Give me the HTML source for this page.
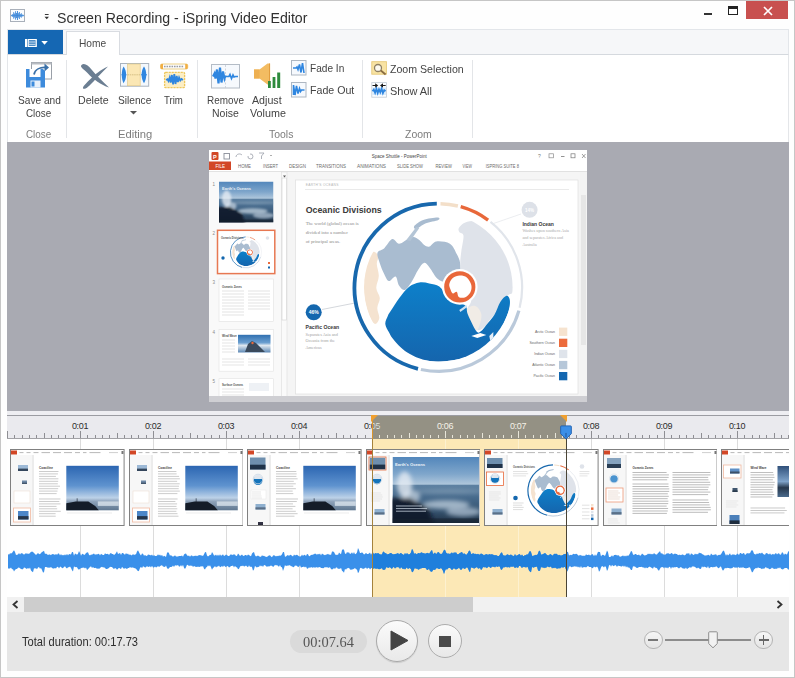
<!DOCTYPE html>
<html><head><meta charset="utf-8"><title>Screen Recording - iSpring Video Editor</title>
<style>
*{box-sizing:border-box;margin:0;padding:0}
html,body{width:795px;height:678px;overflow:hidden;background:#fff;font-family:"Liberation Sans",sans-serif;}
#win{position:absolute;left:0;top:0;width:795px;height:678px;background:#fefefe;box-shadow:inset 0 0 0 1px #c6c6c6;overflow:hidden}
#win div,#win span,#win i,#win svg,#win b{position:absolute}
i{display:block}
.t{white-space:nowrap;transform-origin:0 0}
/* title */
#title{left:57px;top:7px;font-size:16px;line-height:20px;color:#2a2a2a;transform:scaleX(.885)}
#tabs{left:7px;top:29px;width:781.5px;height:26px;background:#f6f7f9;border:1px solid #e3e6ea;border-bottom-color:#d5d9de}
#filebtn{left:8px;top:30px;width:55px;height:24px;background:#1567b3}
#hometab{left:65.5px;top:31px;width:54px;height:24px;background:#fff;border:1px solid #d9dce1;border-bottom:none}
#hometab span{left:12px;top:5px;font-size:11px;color:#444;line-height:13px}
#ribbon{left:7px;top:55px;width:781.5px;height:87px;background:#fff;border-left:1px solid #e4e6e9;border-right:1px solid #e4e6e9}
.lbl{font-size:11px;color:#444;line-height:13px;white-space:nowrap;transform-origin:0 0}
.grp{font-size:11px;color:#7a7a7a;line-height:13px;white-space:nowrap;transform-origin:0 0}
.sep{top:60px;width:1px;height:78px;background:#e3e5e8}
/* preview */
#preview{left:7px;top:142px;width:781.5px;height:269px;background:#a9aab2}
/* timeline */
#tlgap{left:7px;top:411px;width:781.5px;height:4px;background:#eeeef2}
#tl{left:7px;top:415px;width:781.5px;height:182px;background:#fff;overflow:hidden}
#ruler{left:0;top:0;width:781.5px;height:24px;background:#eaeaee;border-top:1px solid #9b9ca2;border-bottom:1px solid #a2a2a6}
.tk{position:absolute;bottom:0;width:1px;background:#8e8e93}
.rl{top:4.5px;width:30px;text-align:center;font-size:9px;line-height:11px;color:#2c2c2c;letter-spacing:-.35px}
.gl{top:24px;width:1px;height:160px;background:#dcdcdc}
#scroll{left:7px;top:597px;width:781.5px;height:15px;background:#f1f1f1}
#bottom{left:7px;top:612px;width:781.5px;height:59px;background:#e6e6e6}
#selr{left:365px;top:0;width:194px;height:24px;background:#949184}
.ts{background:#e8e6da}
.rs{color:#f4f2e8}
#sely{left:365px;top:24px;width:194px;height:158px;background:#fce8b6}
.gs{background:#fdf1d0}
.th{top:34px;width:114.6px;height:77px;overflow:hidden}
.th svg{left:0;top:0}
#selL{left:364.5px;top:0;width:1.5px;height:182px;background:linear-gradient(#d9962e 0,#d9962e 24px,#a5823c 24px)}
#ph{left:558.5px;top:20px;width:1.3px;height:162px;background:#4a4436}
#sthumb{left:17px;top:0;width:449px;height:15px;background:#cdcdcd}
#pill{left:289.5px;top:630px;width:77.5px;height:23px;border-radius:11.5px;background:#dadada}
#play{left:375.8px;top:619.9px;width:42px;height:42px;border-radius:50%;background:linear-gradient(#fbfbfb,#e9e9e9);border:1px solid #a9a9a9;box-shadow:0 1px 1px rgba(0,0,0,.12)}
#stop{left:427.8px;top:623.9px;width:34px;height:34px;border-radius:50%;background:linear-gradient(#fafafa,#e8e8e8);border:1px solid #adadad}
.zc{width:18.5px;height:18.5px;border-radius:50%;background:linear-gradient(#f6f6f6,#e4e4e4);border:1px solid #b4b4b4}

</style></head><body>
<div id="win">
<svg style="left:10px;top:9px" width="15" height="13" viewBox="0 0 15 13"><rect x=".5" y=".5" width="14" height="12" fill="#fafcfe" stroke="#a9b0ba"/><path d="M1 6.5h13" stroke="#7fb2ea" stroke-width=".8"/><path d="M1.8 5.8v1.5M2.8 5v3M3.7 3.2v6.5M4.6 4.5v4M5.6 2.2v8.5M6.5 4v5M7.5 2v9M8.4 4.2v4.5M9.4 3v7M10.3 5v3M11.3 4.2v4.5M12.2 5.5v2M13.2 5.8v1.5" fill="none" stroke="#2f7fd6" stroke-width=".85"/></svg>
<svg style="left:43.5px;top:13.8px" width="5.5" height="6" viewBox="0 0 7 8"><rect x="1" y="0" width="5" height="1.3" fill="#333"/><path d="M.5 3.5h6l-3 3.5z" fill="#333"/></svg>
<span class="t" style="left:56.7px;top:10.1px;font-size:15.5px;line-height:1;color:#303030;transform:scaleX(0.912);">Screen Recording - iSpring Video Editor</span>
<i style="position:absolute;left:704px;top:13px;width:8px;height:2px;background:#333"></i>
<i style="position:absolute;left:728px;top:6px;width:10px;height:9px;border:1px solid #222;border-top-width:3px"></i>
<div style="left:746px;top:1px;width:42px;height:18px;background:#c8504f"></div>
<svg style="left:763px;top:6px" width="10" height="10" viewBox="0 0 10 10"><path d="M1 1l8 8M9 1l-8 8" stroke="#fff" stroke-width="1.7"/></svg>
<div id="tabs"></div>
<div id="filebtn"><svg style="left:17.2px;top:9px" width="28" height="8" viewBox="0 0 28 8"><rect x="0" y="0" width="2" height="8" fill="#fff"/><rect x="3.2" y=".6" width="8" height="6.8" fill="none" stroke="#fff" stroke-width="1.3"/><path d="M4 3h6.5M4 5.2h6.5" stroke="#fff" stroke-width="1"/><path d="M16.3 2h6.5l-3.25 3.8z" fill="#fff"/></svg></div>
<div id="hometab"></div><span class="t" style="left:78.5px;top:38px;font-size:11px;line-height:1;color:#4a4a4a;transform:scaleX(0.927);">Home</span>
<div id="ribbon"></div><i class="sep" style="left:66px"></i><i class="sep" style="left:197px"></i><i class="sep" style="left:362px"></i><i class="sep" style="left:472px"></i><span class="t" style="left:17.6px;top:95.3px;font-size:11px;line-height:1;color:#444;transform:scaleX(0.921);">Save and</span><span class="t" style="left:26.4px;top:107.9px;font-size:11px;line-height:1;color:#444;transform:scaleX(0.896);">Close</span><span class="t" style="left:26.4px;top:128.7px;font-size:11px;line-height:1;color:#7d7d7d;transform:scaleX(0.896);">Close</span><span class="t" style="left:78px;top:95.3px;font-size:11px;line-height:1;color:#444;transform:scaleX(0.966);">Delete</span><span class="t" style="left:117.7px;top:95.3px;font-size:11px;line-height:1;color:#444;transform:scaleX(0.923);">Silence</span><span class="t" style="left:163.5px;top:95.3px;font-size:11px;line-height:1;color:#444;transform:scaleX(0.875);">Trim</span><span class="t" style="left:117.7px;top:128.7px;font-size:11px;line-height:1;color:#7d7d7d;transform:scaleX(1.02);">Editing</span><svg style="left:130px;top:111px" width="7" height="4"><path d="M0 0h7l-3.5 3.5z" fill="#555"/></svg><span class="t" style="left:206.5px;top:95.3px;font-size:11px;line-height:1;color:#444;transform:scaleX(0.901);">Remove</span><span class="t" style="left:212.2px;top:107.9px;font-size:11px;line-height:1;color:#444;transform:scaleX(0.953);">Noise</span><span class="t" style="left:252.4px;top:95.3px;font-size:11px;line-height:1;color:#444;transform:scaleX(0.968);">Adjust</span><span class="t" style="left:249.5px;top:107.9px;font-size:11px;line-height:1;color:#444;transform:scaleX(0.978);">Volume</span><span class="t" style="left:269.2px;top:128.7px;font-size:11px;line-height:1;color:#7d7d7d;transform:scaleX(0.95);">Tools</span><span class="t" style="left:309.7px;top:63.3px;font-size:11px;line-height:1;color:#444;transform:scaleX(0.919);">Fade In</span><span class="t" style="left:309.7px;top:85.3px;font-size:11px;line-height:1;color:#444;transform:scaleX(0.966);">Fade Out</span><span class="t" style="left:390px;top:63.5px;font-size:11px;line-height:1;color:#444;transform:scaleX(0.964);">Zoom Selection</span><span class="t" style="left:390px;top:85.7px;font-size:11px;line-height:1;color:#444;transform:scaleX(0.995);">Show All</span><span class="t" style="left:404.8px;top:128.7px;font-size:11px;line-height:1;color:#7d7d7d;transform:scaleX(0.953);">Zoom</span><!-- save and close -->
<svg style="left:24px;top:60px" width="30" height="30" viewBox="0 0 30 30">
<rect x="7.5" y="2.5" width="20" height="16.5" fill="#fff" stroke="#9aa0a8"/>
<rect x="7.5" y="2.5" width="20" height="2" fill="#b8bcc2"/>
<path d="M2 9h17l2 2v16.5H2z" fill="#3d8bdc"/>
<rect x="5.5" y="9" width="11" height="8" fill="#fff"/>
<rect x="6.5" y="20.5" width="10" height="7" fill="#e9f1fb"/>
<rect x="7.5" y="21.5" width="3" height="5" fill="#3d8bdc"/>
<path d="M10 14.5c1-5 6-7.5 12-7" fill="none" stroke="#3a70a8" stroke-width="1.8"/>
<path d="M20.5 3.5l4.5 4-4.5 4z" fill="#3a70a8"/>
</svg>
<!-- delete -->
<svg style="left:79px;top:62px" width="32" height="28" viewBox="0 0 32 28">
<path d="M2.5 3c2.5-2.5 6.5 0 10 4.5 5 6 10.5 11.5 17.5 18-8-2.5-15.5-8-21.5-14.5C4.5 7 0.5 5 2.5 3z" fill="#6b7e92"/>
<path d="M29 4.5c-7.5 3-13.5 8.5-17.5 12.5-4.5 4.5-8 7.5-7.5 9.5 2.5 1.5 6-2.5 9-5.5C17 17 23 10.5 29 4.5z" fill="#6b7e92"/>
</svg>
<!-- silence -->
<svg style="left:120px;top:62px" width="30" height="26" viewBox="0 0 30 26">
<rect x=".5" y="1.5" width="28.2" height="22.7" fill="#f4f8fc" stroke="#a9b3be"/>
<rect x="7.6" y="2" width="12.6" height="21.7" fill="#fbe7b4" stroke="#e3cb8c" stroke-width=".7"/>
<path d="M7.6 12.8h12.6" stroke="#cdb679" stroke-width=".8" stroke-dasharray="1.5 .7"/>
<path d="M3.5 4.5C7 9 7 16.5 3.5 21.2C1.2 16.5 1.2 9 3.5 4.5z" fill="#2f86e0"/>
<path d="M6.5 12.8h-5" stroke="#2f86e0" stroke-width="1"/>
<path d="M24 4.5C27 9 27 16.5 24 21.2C20.8 16.5 20.8 9 24 4.5z" fill="#2f86e0"/>
<path d="M21 12.8h6" stroke="#2f86e0" stroke-width="1"/>
</svg>
<!-- trim -->
<svg style="left:159px;top:61px" width="30" height="28" viewBox="0 0 30 28">
<rect x="1.5" y="3" width="27.2" height="5" rx="1.5" fill="#fdfdfd" stroke="#e9c977" stroke-width=".9"/>
<path d="M5 5.5h20" stroke="#9a9da3" stroke-width="1.4" stroke-dasharray="1.6 .9"/>
<path d="M1.5 4.2a1.2 1.2 0 0 1 1.2-1.2H4v5H2.7a1.2 1.2 0 0 1-1.2-1.2zM28.7 4.2a1.2 1.2 0 0 0-1.2-1.2H26.2v5h1.3a1.2 1.2 0 0 0 1.2-1.2z" fill="#f2ae42"/>
<rect x="5.6" y="11.4" width="20" height="15.2" rx="1" fill="#fceec4" stroke="#eec85e" stroke-width="1.3" stroke-dasharray="2.2 .8"/>
<path d="M7 19l1.5-.8 1 1.8 1.2-3.5 1 5 1.2-7.5 1.2 9.5 1.2-10.5 1.2 10 1.2-8 1.2 6 1.2-4.5 1.2 3 1.2-1.5 1.5 1" fill="none" stroke="#2f86e0" stroke-width="1.8"/>
</svg>
<!-- remove noise -->
<svg style="left:211px;top:64px" width="29" height="25" viewBox="0 0 29 25">
<rect x=".5" y=".5" width="28" height="23.5" fill="#f6f9fd" stroke="#b4bcc6"/>
<path d="M14.5 1v23" stroke="#c6ccd4" stroke-width=".8" stroke-dasharray="2 1.5"/>
<path d="M2 12.5l1.5-3 1 5 1.5-9 1.5 14 1.5-16 1.5 15 1.5-11 1.5 7 1-3" fill="none" stroke="#2f86e0" stroke-width="2.2"/>
<path d="M15 12.5h3l1-2 1.5 4 1.5-3.5 1 2 1.5-.5h2.5" fill="none" stroke="#2f86e0" stroke-width="1.7"/>
</svg>
<!-- adjust volume -->
<svg style="left:252px;top:62px" width="32" height="27" viewBox="0 0 32 27">
<path d="M2 7.5h5.5L15.5 1.5h2.5v21h-2.5L7.5 16.5H2z" fill="#f3bc62"/>
<path d="M2 7.5h5.5v9H2z" fill="#eeb052"/>
<path d="M17.6 1.5v21" stroke="#e09a3c" stroke-width="1"/>
<rect x="16" y="19" width="2.8" height="7" fill="#2e8b3d"/>
<rect x="20.6" y="15" width="2.8" height="11" fill="#2e8b3d"/>
<rect x="25.2" y="10.5" width="3" height="15.5" fill="#2e8b3d"/>
</svg>
<!-- fade in -->
<svg style="left:291px;top:60px" width="16" height="16" viewBox="0 0 16 16">
<rect x=".5" y=".5" width="14.5" height="14.5" fill="#f6f9fd" stroke="#aeb7c2"/>
<path d="M2 8h3l1-1 1 2.5 1.5-5 1.5 8 1.5-9.5 1.5 10" fill="none" stroke="#2f86e0" stroke-width="1.6"/>
</svg>
<!-- fade out -->
<svg style="left:291px;top:81.8px" width="16" height="16" viewBox="0 0 16 16">
<rect x=".5" y=".5" width="14.5" height="14.5" fill="#f6f9fd" stroke="#aeb7c2"/>
<path d="M2.5 13V3l1.5 10 1.5-9 1.5 7.5 1.5-5 1 3 1-1.5h3" fill="none" stroke="#2f86e0" stroke-width="1.6"/>
</svg>
<!-- zoom selection -->
<svg style="left:371px;top:60.5px" width="17" height="15" viewBox="0 0 17 15">
<rect x=".8" y=".7" width="14.6" height="12.5" fill="#f8e3a4" stroke="#e6c978" stroke-width=".9"/>
<circle cx="7" cy="7" r="3.5" fill="#fdfaf0" stroke="#8f8064" stroke-width="1.3"/>
<path d="M9.8 9.6l4.8 3.8" stroke="#8a6d42" stroke-width="1.9"/>
</svg>
<!-- show all -->
<svg style="left:371px;top:82px" width="17" height="16" viewBox="0 0 17 16">
<rect x=".8" y=".6" width="14.6" height="14.6" fill="#fbfdff" stroke="#c3ccd6" stroke-width=".8"/>
<rect x="1.2" y="5.5" width="13.8" height="7.5" fill="#d9ebfb"/>
<path d="M1.5 9.2l1.3-1.7 1.3 3.4 1.3-4.4 1.3 4.6 1.3-3.8 1.3 3 1.3-3.8 1.3 4.6 1.3-3 1.4 1.1" fill="none" stroke="#2f86e0" stroke-width="1.7"/>
<path d="M1.5 3.5h4M10.7 3.5h4" stroke="#1a1a1a" stroke-width="1.1"/><path d="M4.2 1.3l3 2.2-3 2.2zM12 1.3l-3 2.2 3 2.2z" fill="#1a1a1a"/>
</svg>
<div id="preview"></div><svg style="left:209px;top:150px" width="378" height="252" viewBox="0 0 378 252" font-family="Liberation Sans, sans-serif"><rect width="378" height="252" fill="#fff"/><rect x="0" y="21" width="378" height="231" fill="#f5f5f5"/><rect x="0" y="21" width="72" height="231" fill="#f9f9f9"/><rect x="2.5" y="2" width="7" height="8" rx="1" fill="#d24726"/><text x="4" y="8.5" font-size="5.5" font-weight="700" fill="#fff">P</text><rect x="15" y="3.5" width="5.5" height="5.5" fill="none" stroke="#8a8f99" stroke-width=".9"/><path d="M27 7c0-3 4-4 6-2M39 6a2.5 2.5 0 1 0 2-2M50 3h5l-2.5 3v3" fill="none" stroke="#9a9faa" stroke-width=".8"/><path d="M61 5.5h2" stroke="#999" stroke-width=".8"/><text x="162.8" y="7.8" font-size="4.7" fill="#444" textLength="55" lengthAdjust="spacingAndGlyphs">Space Shuttle - PowerPoint</text><text x="329" y="8" font-size="5" fill="#777">?</text><rect x="340" y="3.8" width="4.5" height="4" fill="none" stroke="#8a8a8a" stroke-width=".7"/><path d="M352 6.5h3.5" stroke="#777" stroke-width=".8"/><rect x="362" y="3.8" width="4" height="4" fill="none" stroke="#777" stroke-width=".7"/><path d="M373 4l3.5 4M376.5 4l-3.5 4" stroke="#777" stroke-width=".7"/><rect x="0" y="11.5" width="22" height="8.5" fill="#d24726"/><text x="6.5" y="17.6" font-size="4.6" fill="#fff" textLength="9.5" lengthAdjust="spacingAndGlyphs">FILE</text><text x="29" y="17.5" font-size="4.5" fill="#6a6a6a" textLength="13" lengthAdjust="spacingAndGlyphs">HOME</text><text x="54" y="17.5" font-size="4.5" fill="#6a6a6a" textLength="15" lengthAdjust="spacingAndGlyphs">INSERT</text><text x="80" y="17.5" font-size="4.5" fill="#6a6a6a" textLength="17" lengthAdjust="spacingAndGlyphs">DESIGN</text><text x="107" y="17.5" font-size="4.5" fill="#6a6a6a" textLength="30" lengthAdjust="spacingAndGlyphs">TRANSITIONS</text><text x="148" y="17.5" font-size="4.5" fill="#6a6a6a" textLength="29" lengthAdjust="spacingAndGlyphs">ANIMATIONS</text><text x="188" y="17.5" font-size="4.5" fill="#6a6a6a" textLength="26" lengthAdjust="spacingAndGlyphs">SLIDE SHOW</text><text x="226.6" y="17.5" font-size="4.5" fill="#6a6a6a" textLength="16.4" lengthAdjust="spacingAndGlyphs">REVIEW</text><text x="253.6" y="17.5" font-size="4.5" fill="#6a6a6a" textLength="9.4" lengthAdjust="spacingAndGlyphs">VIEW</text><text x="276.7" y="17.5" font-size="4.5" fill="#6a6a6a" textLength="33.3" lengthAdjust="spacingAndGlyphs">ISPRING SUITE 8</text><path d="M0 21.5h378" stroke="#dcdcdc" stroke-width=".8"/><text x="3.5" y="36" font-size="4.5" fill="#8a8a8a">1</text><text x="3.5" y="85" font-size="4.5" fill="#8a8a8a">2</text><text x="3.5" y="134" font-size="4.5" fill="#8a8a8a">3</text><text x="3.5" y="184" font-size="4.5" fill="#8a8a8a">4</text><text x="3.5" y="233" font-size="4.5" fill="#8a8a8a">5</text><defs><linearGradient id="osa" x1="0" y1="0" x2="0" y2="1"><stop offset="0" stop-color="#5286bb"/><stop offset=".6" stop-color="#7fa6cb"/><stop offset="1" stop-color="#b4cadd"/></linearGradient><linearGradient id="oea" x1="0" y1="0" x2="0" y2="1"><stop offset="0" stop-color="#5d81a2"/><stop offset=".35" stop-color="#46698b"/><stop offset=".7" stop-color="#35526e"/><stop offset="1" stop-color="#1f3044"/></linearGradient><filter id="oba" x="-30%" y="-30%" width="160%" height="160%"><feGaussianBlur stdDeviation="1.2"/></filter><clipPath id="oca"><rect x="10" y="31.5" width="54.5" height="41"/></clipPath></defs><g clip-path="url(#oca)"><rect x="10" y="31.5" width="54.5" height="17.6" fill="url(#osa)"/><rect x="10" y="48.7" width="54.5" height="23.8" fill="url(#oea)"/><g filter="url(#oba)"><ellipse cx="17.6" cy="48.7" rx="4.6" ry="8.2" fill="#e9eff5" opacity=".75"/><ellipse cx="22" cy="56.1" rx="5.5" ry="4.1" fill="#dfe8f0" opacity=".6"/><ellipse cx="43.8" cy="61" rx="14.7" ry="2.7" fill="#b8c9d8" opacity=".8"/><ellipse cx="54.7" cy="65.5" rx="10.9" ry="2.9" fill="#aebfd0" opacity=".75"/><ellipse cx="45.4" cy="52.8" rx="21.8" ry="1.4" fill="#8da6bd" opacity=".6"/><path d="M7.3 56.9L20.9 56.9L32.9 63.5L37.2 76.6L7.3 76.6z" fill="#111b28" opacity=".9"/></g><rect x="10" y="69.6" width="54.5" height="2.9" fill="#16212e" opacity=".55"/></g><text x="13" y="40" font-size="4" font-weight="700" fill="#e8eef5">Earth's Oceans</text><rect x="8.5" y="80.3" width="57.3" height="43.3" fill="#fff" stroke="#e77852" stroke-width="1.5"/><g transform="translate(36.9 102.4) scale(0.185) translate(-229 -137.5)"><path d="M208.7 218.8 A83.8 83.8 0 0 1 227.5 53.7" fill="none" stroke="#1868ad" stroke-width="3.8"/><path d="M231.2 53.7 A83.8 83.8 0 0 1 248.6 56" fill="none" stroke="#f3dfc9" stroke-width="3.4"/><path d="M251.4 56.7 A83.8 83.8 0 0 1 278.8 70.1" fill="none" stroke="#e8683a" stroke-width="3.4"/><path d="M281.2 71.9 A83.8 83.8 0 0 1 310.3 157.8" fill="none" stroke="#e1e5eb" stroke-width="2.2"/><path d="M309.6 160.6 A83.8 83.8 0 0 1 211.6 219.5" fill="none" stroke="#bac9da" stroke-width="3.2"/><defs><linearGradient id="g369b" x1="0" y1="0" x2="0" y2="1"><stop offset="0" stop-color="#0d80ca"/><stop offset="1" stop-color="#1565ad"/></linearGradient><clipPath id="g369c"><circle cx="229" cy="137.5" r="74.3"/></clipPath></defs><g clip-path="url(#g369c)"><path d="M163.5 102 C161.7 103 159.4 108.2 158 112 C156.6 115.8 155.6 120.3 155 125 C154.4 129.7 154.2 135 154.5 140 C154.8 145 155.4 150.3 156.5 155 C157.6 159.7 159.4 164.8 161 168 C162.6 171.2 164.5 174 166 174 C167.5 174 169.7 170.7 170 168 C170.3 165.3 167.9 161.3 168 158 C168.1 154.7 170.7 151.3 170.5 148 C170.3 144.7 167.2 141.7 167 138 C166.8 134.3 169.4 130 169.5 126 C169.6 122 167.6 117.3 167.5 114 C167.4 110.7 169.7 108 169 106 C168.3 104 165.3 101 163.5 102Z" fill="#f5e3d0" /><path d="M168.2 102.7 C169 100.2 172.6 100.5 175 98.2 C177.4 95.9 180.5 89.8 182.9 89.1 C185.3 88.3 187.2 93.6 189.7 93.7 C192.2 93.8 195.6 90.6 198 89.5 C200.4 88.4 202 86.9 204 87 C206 87.1 208.2 88.7 210 90 C211.8 91.3 213.3 93.9 215 95 C216.7 96.1 218.2 97.1 220.2 96.5 C222.2 95.9 223.6 91.9 227 91.4 C230.4 90.9 237.2 91.6 240.6 93.7 C244 95.8 245.7 100.7 247.4 103.9 C249.1 107.1 250.3 109.6 250.8 112.9 C251.3 116.2 251.8 120.8 250.5 124 C249.2 127.2 245.4 130.6 243 132 C240.6 133.4 238.6 132.7 236.1 132.2 C233.6 131.7 230.8 131.3 228.2 128.8 C225.5 126.3 222.5 120.1 220.2 117.4 C217.9 114.8 216.5 112.5 214.6 112.9 C212.7 113.3 211 116.5 208.9 119.7 C206.8 122.9 204.4 128.8 202.1 132.2 C199.8 135.6 197.4 139.4 195.3 140 C193.2 140.6 191.2 137.8 189.7 135.6 C188.2 133.3 188 127.3 186.3 126.5 C184.6 125.7 181.4 131.4 179.5 131 C177.6 130.6 176.5 127.2 175 124.2 C173.5 121.2 171.5 116.5 170.4 112.9 C169.3 109.3 167.4 105.2 168.2 102.7Z" fill="#a9bcd0" /><path d="M205 76 C206.2 74.5 210.2 71.4 214 70 C217.8 68.6 225.5 67.5 228 67.5 C230.5 67.5 231 69 229 70 C227 71 219.7 72 216 73.5 C212.3 75 208.8 78.6 207 79 C205.2 79.4 203.8 77.5 205 76Z" fill="#a9bcd0" /><path d="M197 90 L207 77 L210 78 L201 91Z" fill="#b4c5d6" /><path d="M249.7 77.8 C250.7 76.2 252.9 73.6 256 72.5 C259.1 71.4 264 70.4 268 71 C272 71.6 276 72.8 280 76 C284 79.2 288.7 84.7 292 90 C295.3 95.3 298 101.7 300 108 C302 114.3 303.4 122.3 304 128 C304.6 133.7 304.5 139 303.5 142 C302.5 145 300.2 143 298 146 C295.8 149 292.7 156.3 290 160 C287.3 163.7 284.5 165.2 282 168 C279.5 170.8 277.3 175 275 177 C272.7 179 270.2 181.2 268 180 C265.8 178.8 263.7 173.3 262 170 C260.3 166.7 258 163.3 258 160 C258 156.7 262 153.7 262 150 C262 146.3 259.7 142.3 258 138 C256.3 133.7 253.2 128.3 252 124 C250.8 119.7 251 115.7 251 112 C251 108.3 251.5 106 252 101.6 C252.5 97.2 254.5 89.1 254.2 85.8 C253.9 82.5 250.8 83.3 250 82 C249.2 80.7 248.7 79.4 249.7 77.8Z" fill="#dfe3ea" /><path d="M257 160 C258 157.3 263.5 155.3 266 156 C268.5 156.7 271.3 160.7 272 164 C272.7 167.3 271 173.2 270 176 C269 178.8 267.7 181.7 266 181 C264.3 180.3 261.5 175.5 260 172 C258.5 168.5 256 162.7 257 160Z" fill="#f1ece6" /><path d="M176 174 C175.8 171.3 177.6 168.2 178.5 166 C179.4 163.8 179.8 163.6 181.7 160.6 C183.6 157.6 187 152 190 148 C193 144 196.6 139.4 199.9 136.8 C203.2 134.2 206.7 133.1 210 132.5 C213.3 131.9 216.7 132.7 220 133.4 C223.3 134.1 227 134.4 230 136.5 C233 138.6 235 143.4 238 146 C241 148.6 244.9 150.3 248 152 C251.1 153.7 254.8 154.2 256.5 156 C258.2 157.8 257.1 160.3 258 163 C258.9 165.7 260.4 168.8 262 172 C263.6 175.2 266.1 180.5 267.8 182 C269.5 183.5 270.5 182.1 272 181 C273.5 179.9 274.6 178 276.8 175.3 C279 172.6 282.6 168.9 285 165 C287.4 161.1 289 155.2 291 152 C293 148.8 295.6 146.1 297.2 145.8 C298.8 145.5 300.1 147.6 300.5 150 C300.9 152.4 300.6 156 299.5 160 C298.4 164 296.2 169.6 294 174 C291.8 178.4 289 182.8 286 186.6 C283 190.4 279.8 194 276 197 C272.2 200 268 202.6 263.3 204.7 C258.6 206.8 253.3 208.4 248 209.5 C242.7 210.6 236.6 211.3 231.6 211.5 C226.6 211.7 221.8 211.1 218 210.5 C214.2 209.9 212.3 209.3 209 208 C205.7 206.7 201.2 204.6 198 202.5 C194.8 200.4 192.2 198.1 189.7 195.7 C187.2 193.3 184.7 190.3 183 188 C181.3 185.7 180.7 184.3 179.5 182 C178.3 179.7 176.2 176.7 176 174Z" fill="url(#g369b)" /><path d="M262 186 L271 183 L277 185 L268 188Z" fill="#fff" /><path d="M280 186 L284 182 L284 190 L281 191Z" fill="#e6eff8" /><path d="M250 160 L257 155 L258 157 L251 162Z" fill="#cfe3f4" /></g><circle cx="250.5" cy="136.9" r="17.8" fill="#fff"/><circle cx="250.5" cy="136.9" r="15.6" fill="#e9673a"/><path d="M240 133.9 C240.4 132.1 241.8 129.3 243.5 127.9 C245.2 126.5 248.2 125.5 250.5 125.4 C252.8 125.3 255.6 125.8 257.5 127.4 C259.4 129 261.4 132.4 262 134.9 C262.6 137.4 262.1 140.3 261 142.4 C259.9 144.5 257.4 146.7 255.5 147.4 C253.6 148.2 250.8 147.8 249.5 146.9 C248.2 146 248.5 142.5 247.5 141.9 C246.5 141.3 244.6 143.9 243.5 143.4 C242.4 142.9 241.6 140.5 241 138.9 C240.4 137.3 239.6 135.7 240 133.9Z" fill="#fff" /></g><circle cx="14" cy="108" r="1.7" fill="#1467ae"/><rect x="59" y="112" width="2" height="2" fill="#ea6a3c"/><rect x="59" y="116.5" width="2" height="2" fill="#1467ae"/><circle cx="58.5" cy="88" r="1.8" fill="#dfe3ea"/><text x="12" y="88.5" font-size="2.6" font-weight="700" fill="#555">Oceanic Divisions</text><rect x="10" y="129" width="54.5" height="42.3" fill="#fff" stroke="#e2e2e2" stroke-width=".6"/><text x="13" y="137.5" font-size="2.8" font-weight="700" fill="#555">Oceanic Zones</text><path d="M13 141h22M39 141h22" stroke="#dcdcdc" stroke-width=".8"/><path d="M13 144h22M39 144h22" stroke="#dcdcdc" stroke-width=".8"/><path d="M13 147h22M39 147h22" stroke="#dcdcdc" stroke-width=".8"/><path d="M13 150h22M39 150h22" stroke="#dcdcdc" stroke-width=".8"/><path d="M13 153h22M39 153h22" stroke="#dcdcdc" stroke-width=".8"/><path d="M13 156h22M39 156h22" stroke="#dcdcdc" stroke-width=".8"/><path d="M13 159h22M39 159h22" stroke="#dcdcdc" stroke-width=".8"/><path d="M13 162h22" stroke="#dcdcdc" stroke-width=".8"/><path d="M13 165h22" stroke="#dcdcdc" stroke-width=".8"/><rect x="10" y="179.4" width="54.5" height="41.8" fill="#fff" stroke="#e2e2e2" stroke-width=".6"/><text x="13" y="186.5" font-size="2.8" font-weight="700" fill="#555">Wind Wave</text><defs><linearGradient id="p4" x1="0" y1="0" x2="0" y2="1"><stop offset="0" stop-color="#2f6fb0"/><stop offset=".45" stop-color="#6b9fd0"/><stop offset=".6" stop-color="#dfe8f0"/><stop offset="1" stop-color="#5d88b5"/></linearGradient></defs><rect x="29" y="184.8" width="32.5" height="17.7" fill="url(#p4)"/><path d="M36 202l3-8 4-3 4 2 5 5 4 4z" fill="#3a4a5c"/><circle cx="43.5" cy="193" r="1.2" fill="#e8693a"/><path d="M13 190h13" stroke="#dedede" stroke-width=".8"/><path d="M13 193h13" stroke="#dedede" stroke-width=".8"/><path d="M13 196h13" stroke="#dedede" stroke-width=".8"/><path d="M13 199h13" stroke="#dedede" stroke-width=".8"/><path d="M13 202h13" stroke="#dedede" stroke-width=".8"/><path d="M13 209h22M39 209h22" stroke="#dedede" stroke-width=".8"/><path d="M13 212h22M39 212h22" stroke="#dedede" stroke-width=".8"/><path d="M13 215h22M39 215h22" stroke="#dedede" stroke-width=".8"/><rect x="10" y="228.7" width="54.5" height="24" fill="#fff" stroke="#e2e2e2" stroke-width=".6"/><text x="13" y="235.5" font-size="2.8" font-weight="700" fill="#555">Surface Oceans</text><path d="M13 239h22" stroke="#dedede" stroke-width=".8"/><path d="M13 242h22" stroke="#dedede" stroke-width=".8"/><path d="M13 245h22" stroke="#dedede" stroke-width=".8"/><path d="M13 248h22" stroke="#dedede" stroke-width=".8"/><path d="M13 251h22" stroke="#dedede" stroke-width=".8"/><rect x="40" y="233" width="20" height="8" fill="#eef1f5"/><rect x="43" y="246" width="14" height="6" fill="#1d4f86"/><rect x="72.5" y="22" width="5.5" height="230" fill="#fafafa" stroke="#dedede" stroke-width=".6"/><rect x="73" y="28" width="4.5" height="142" fill="#fff" stroke="#d0d0d0" stroke-width=".6"/><path d="M74 25.5h3l-1.5 2z" fill="#555"/><path d="M74 249h3l-1.5 2z" fill="#555"/><rect x="86.6" y="30" width="282.4" height="214" fill="#fff" stroke="#e0e0e0" stroke-width=".7"/><rect x="371" y="22" width="7" height="224" fill="#f3f3f3"/><rect x="372" y="45" width="5" height="150" fill="#e6e6e6"/><rect x="0" y="246" width="378" height="6" fill="#cfcfd3"/><text x="96.7" y="36" font-size="3.3" fill="#b5b5b5" letter-spacing=".3">EARTH'S OCEANS</text><path d="M96 39.5h264" stroke="#e4e4e4" stroke-width=".8"/><text x="96.7" y="63.3" font-size="9.6" font-weight="700" fill="#3a3a3a" textLength="76" lengthAdjust="spacingAndGlyphs">Oceanic Divisions</text><text x="96.7" y="75.3" font-size="4.8" fill="#8a8a8a" font-family="Liberation Serif, serif">The world (global) ocean is</text><text x="96.7" y="84" font-size="4.8" fill="#8a8a8a" font-family="Liberation Serif, serif">divided into a number</text><text x="96.7" y="92.7" font-size="4.8" fill="#8a8a8a" font-family="Liberation Serif, serif">of principal areas.</text><path d="M113 159.5L146 153" stroke="#cfd3d8" stroke-width=".9"/><path d="M312 64L283 74" stroke="#e6e8ec" stroke-width=".8"/><g transform="translate(229.3 137.5) scale(1) translate(-229 -137.5)"><path d="M208.7 218.8 A83.8 83.8 0 0 1 227.5 53.7" fill="none" stroke="#1868ad" stroke-width="3.8"/><path d="M231.2 53.7 A83.8 83.8 0 0 1 248.6 56" fill="none" stroke="#f3dfc9" stroke-width="3.4"/><path d="M251.4 56.7 A83.8 83.8 0 0 1 278.8 70.1" fill="none" stroke="#e8683a" stroke-width="3.4"/><path d="M281.2 71.9 A83.8 83.8 0 0 1 310.3 157.8" fill="none" stroke="#e1e5eb" stroke-width="2.2"/><path d="M309.6 160.6 A83.8 83.8 0 0 1 211.6 219.5" fill="none" stroke="#bac9da" stroke-width="3.2"/><defs><linearGradient id="g2293b" x1="0" y1="0" x2="0" y2="1"><stop offset="0" stop-color="#0d80ca"/><stop offset="1" stop-color="#1565ad"/></linearGradient><clipPath id="g2293c"><circle cx="229" cy="137.5" r="74.3"/></clipPath></defs><g clip-path="url(#g2293c)"><path d="M163.5 102 C161.7 103 159.4 108.2 158 112 C156.6 115.8 155.6 120.3 155 125 C154.4 129.7 154.2 135 154.5 140 C154.8 145 155.4 150.3 156.5 155 C157.6 159.7 159.4 164.8 161 168 C162.6 171.2 164.5 174 166 174 C167.5 174 169.7 170.7 170 168 C170.3 165.3 167.9 161.3 168 158 C168.1 154.7 170.7 151.3 170.5 148 C170.3 144.7 167.2 141.7 167 138 C166.8 134.3 169.4 130 169.5 126 C169.6 122 167.6 117.3 167.5 114 C167.4 110.7 169.7 108 169 106 C168.3 104 165.3 101 163.5 102Z" fill="#f5e3d0" /><path d="M168.2 102.7 C169 100.2 172.6 100.5 175 98.2 C177.4 95.9 180.5 89.8 182.9 89.1 C185.3 88.3 187.2 93.6 189.7 93.7 C192.2 93.8 195.6 90.6 198 89.5 C200.4 88.4 202 86.9 204 87 C206 87.1 208.2 88.7 210 90 C211.8 91.3 213.3 93.9 215 95 C216.7 96.1 218.2 97.1 220.2 96.5 C222.2 95.9 223.6 91.9 227 91.4 C230.4 90.9 237.2 91.6 240.6 93.7 C244 95.8 245.7 100.7 247.4 103.9 C249.1 107.1 250.3 109.6 250.8 112.9 C251.3 116.2 251.8 120.8 250.5 124 C249.2 127.2 245.4 130.6 243 132 C240.6 133.4 238.6 132.7 236.1 132.2 C233.6 131.7 230.8 131.3 228.2 128.8 C225.5 126.3 222.5 120.1 220.2 117.4 C217.9 114.8 216.5 112.5 214.6 112.9 C212.7 113.3 211 116.5 208.9 119.7 C206.8 122.9 204.4 128.8 202.1 132.2 C199.8 135.6 197.4 139.4 195.3 140 C193.2 140.6 191.2 137.8 189.7 135.6 C188.2 133.3 188 127.3 186.3 126.5 C184.6 125.7 181.4 131.4 179.5 131 C177.6 130.6 176.5 127.2 175 124.2 C173.5 121.2 171.5 116.5 170.4 112.9 C169.3 109.3 167.4 105.2 168.2 102.7Z" fill="#a9bcd0" /><path d="M205 76 C206.2 74.5 210.2 71.4 214 70 C217.8 68.6 225.5 67.5 228 67.5 C230.5 67.5 231 69 229 70 C227 71 219.7 72 216 73.5 C212.3 75 208.8 78.6 207 79 C205.2 79.4 203.8 77.5 205 76Z" fill="#a9bcd0" /><path d="M197 90 L207 77 L210 78 L201 91Z" fill="#b4c5d6" /><path d="M249.7 77.8 C250.7 76.2 252.9 73.6 256 72.5 C259.1 71.4 264 70.4 268 71 C272 71.6 276 72.8 280 76 C284 79.2 288.7 84.7 292 90 C295.3 95.3 298 101.7 300 108 C302 114.3 303.4 122.3 304 128 C304.6 133.7 304.5 139 303.5 142 C302.5 145 300.2 143 298 146 C295.8 149 292.7 156.3 290 160 C287.3 163.7 284.5 165.2 282 168 C279.5 170.8 277.3 175 275 177 C272.7 179 270.2 181.2 268 180 C265.8 178.8 263.7 173.3 262 170 C260.3 166.7 258 163.3 258 160 C258 156.7 262 153.7 262 150 C262 146.3 259.7 142.3 258 138 C256.3 133.7 253.2 128.3 252 124 C250.8 119.7 251 115.7 251 112 C251 108.3 251.5 106 252 101.6 C252.5 97.2 254.5 89.1 254.2 85.8 C253.9 82.5 250.8 83.3 250 82 C249.2 80.7 248.7 79.4 249.7 77.8Z" fill="#dfe3ea" /><path d="M257 160 C258 157.3 263.5 155.3 266 156 C268.5 156.7 271.3 160.7 272 164 C272.7 167.3 271 173.2 270 176 C269 178.8 267.7 181.7 266 181 C264.3 180.3 261.5 175.5 260 172 C258.5 168.5 256 162.7 257 160Z" fill="#f1ece6" /><path d="M176 174 C175.8 171.3 177.6 168.2 178.5 166 C179.4 163.8 179.8 163.6 181.7 160.6 C183.6 157.6 187 152 190 148 C193 144 196.6 139.4 199.9 136.8 C203.2 134.2 206.7 133.1 210 132.5 C213.3 131.9 216.7 132.7 220 133.4 C223.3 134.1 227 134.4 230 136.5 C233 138.6 235 143.4 238 146 C241 148.6 244.9 150.3 248 152 C251.1 153.7 254.8 154.2 256.5 156 C258.2 157.8 257.1 160.3 258 163 C258.9 165.7 260.4 168.8 262 172 C263.6 175.2 266.1 180.5 267.8 182 C269.5 183.5 270.5 182.1 272 181 C273.5 179.9 274.6 178 276.8 175.3 C279 172.6 282.6 168.9 285 165 C287.4 161.1 289 155.2 291 152 C293 148.8 295.6 146.1 297.2 145.8 C298.8 145.5 300.1 147.6 300.5 150 C300.9 152.4 300.6 156 299.5 160 C298.4 164 296.2 169.6 294 174 C291.8 178.4 289 182.8 286 186.6 C283 190.4 279.8 194 276 197 C272.2 200 268 202.6 263.3 204.7 C258.6 206.8 253.3 208.4 248 209.5 C242.7 210.6 236.6 211.3 231.6 211.5 C226.6 211.7 221.8 211.1 218 210.5 C214.2 209.9 212.3 209.3 209 208 C205.7 206.7 201.2 204.6 198 202.5 C194.8 200.4 192.2 198.1 189.7 195.7 C187.2 193.3 184.7 190.3 183 188 C181.3 185.7 180.7 184.3 179.5 182 C178.3 179.7 176.2 176.7 176 174Z" fill="url(#g2293b)" /><path d="M262 186 L271 183 L277 185 L268 188Z" fill="#fff" /><path d="M280 186 L284 182 L284 190 L281 191Z" fill="#e6eff8" /><path d="M250 160 L257 155 L258 157 L251 162Z" fill="#cfe3f4" /></g><circle cx="250.5" cy="136.9" r="17.8" fill="#fff"/><circle cx="250.5" cy="136.9" r="15.6" fill="#e9673a"/><path d="M240 133.9 C240.4 132.1 241.8 129.3 243.5 127.9 C245.2 126.5 248.2 125.5 250.5 125.4 C252.8 125.3 255.6 125.8 257.5 127.4 C259.4 129 261.4 132.4 262 134.9 C262.6 137.4 262.1 140.3 261 142.4 C259.9 144.5 257.4 146.7 255.5 147.4 C253.6 148.2 250.8 147.8 249.5 146.9 C248.2 146 248.5 142.5 247.5 141.9 C246.5 141.3 244.6 143.9 243.5 143.4 C242.4 142.9 241.6 140.5 241 138.9 C240.4 137.3 239.6 135.7 240 133.9Z" fill="#fff" /></g><circle cx="104.7" cy="162.3" r="8" fill="#1467ae"/><text x="104.7" y="164.2" font-size="5" font-weight="700" fill="#fff" text-anchor="middle">46%</text><text x="96.6" y="178.8" font-size="6" font-weight="700" fill="#3a3a3a" textLength="33.5" lengthAdjust="spacingAndGlyphs">Pacific Ocean</text><text x="96.6" y="185.5" font-size="3.8" fill="#a0a0a0" font-family="Liberation Serif, serif" textLength="32.2" lengthAdjust="spacingAndGlyphs">Separates Asia and</text><text x="96.6" y="192.1" font-size="3.8" fill="#a0a0a0" font-family="Liberation Serif, serif" textLength="29.2" lengthAdjust="spacingAndGlyphs">Oceania from the</text><text x="96.6" y="198.7" font-size="3.8" fill="#a0a0a0" font-family="Liberation Serif, serif" textLength="16" lengthAdjust="spacingAndGlyphs">Americas</text><circle cx="320.6" cy="59.8" r="8" fill="#dde1e8"/><text x="320.6" y="61.5" font-size="4.5" font-weight="700" fill="#fff" text-anchor="middle">14%</text><text x="313.4" y="75.8" font-size="5.8" font-weight="700" fill="#3a3a3a" textLength="31.5" lengthAdjust="spacingAndGlyphs">Indian Ocean</text><text x="313.4" y="82.3" font-size="3.6" fill="#a8a8a8" font-family="Liberation Serif, serif" textLength="46.6" lengthAdjust="spacingAndGlyphs">Washes upon southern Asia</text><text x="313.4" y="88.9" font-size="3.6" fill="#a8a8a8" font-family="Liberation Serif, serif" textLength="40.7" lengthAdjust="spacingAndGlyphs">and separates Africa and</text><text x="313.4" y="95.5" font-size="3.6" fill="#a8a8a8" font-family="Liberation Serif, serif" textLength="14.4" lengthAdjust="spacingAndGlyphs">Australia</text><rect x="350" y="177.6" width="8.3" height="8.3" fill="#f6e3cf"/><text x="346" y="183" font-size="3.5" fill="#666" text-anchor="end">Arctic Ocean</text><rect x="350" y="188.7" width="8.3" height="8.3" fill="#ec6b3c"/><text x="346" y="194.1" font-size="3.5" fill="#666" text-anchor="end">Southern Ocean</text><rect x="350" y="199.8" width="8.3" height="8.3" fill="#dfe4eb"/><text x="346" y="205.2" font-size="3.5" fill="#666" text-anchor="end">Indian Ocean</text><rect x="350" y="210.9" width="8.3" height="8.3" fill="#b6c7d9"/><text x="346" y="216.3" font-size="3.5" fill="#666" text-anchor="end">Atlantic Ocean</text><rect x="350" y="222" width="8.3" height="8.3" fill="#1467b0"/><text x="346" y="227.4" font-size="3.5" fill="#666" text-anchor="end">Pacific Ocean</text></svg><div id="tlgap"></div><div id="tl"><div id="ruler"><i id="selr"></i><i class="tk" style="left:0px;height:7px"></i><i class="tk" style="left:7.3px;height:3px"></i><i class="tk" style="left:14.6px;height:3px"></i><i class="tk" style="left:21.9px;height:3px"></i><i class="tk" style="left:29.2px;height:3px"></i><i class="tk" style="left:36.5px;height:5px"></i><i class="tk" style="left:43.8px;height:3px"></i><i class="tk" style="left:51.1px;height:3px"></i><i class="tk" style="left:58.4px;height:3px"></i><i class="tk" style="left:65.7px;height:3px"></i><i class="tk" style="left:73px;height:7px"></i><i class="tk" style="left:80.3px;height:3px"></i><i class="tk" style="left:87.6px;height:3px"></i><i class="tk" style="left:94.9px;height:3px"></i><i class="tk" style="left:102.2px;height:3px"></i><i class="tk" style="left:109.5px;height:5px"></i><i class="tk" style="left:116.8px;height:3px"></i><i class="tk" style="left:124.1px;height:3px"></i><i class="tk" style="left:131.4px;height:3px"></i><i class="tk" style="left:138.7px;height:3px"></i><i class="tk" style="left:146px;height:7px"></i><i class="tk" style="left:153.3px;height:3px"></i><i class="tk" style="left:160.6px;height:3px"></i><i class="tk" style="left:167.9px;height:3px"></i><i class="tk" style="left:175.2px;height:3px"></i><i class="tk" style="left:182.5px;height:5px"></i><i class="tk" style="left:189.8px;height:3px"></i><i class="tk" style="left:197.1px;height:3px"></i><i class="tk" style="left:204.4px;height:3px"></i><i class="tk" style="left:211.7px;height:3px"></i><i class="tk" style="left:219px;height:7px"></i><i class="tk" style="left:226.3px;height:3px"></i><i class="tk" style="left:233.6px;height:3px"></i><i class="tk" style="left:240.9px;height:3px"></i><i class="tk" style="left:248.2px;height:3px"></i><i class="tk" style="left:255.5px;height:5px"></i><i class="tk" style="left:262.8px;height:3px"></i><i class="tk" style="left:270.1px;height:3px"></i><i class="tk" style="left:277.4px;height:3px"></i><i class="tk" style="left:284.7px;height:3px"></i><i class="tk" style="left:292px;height:7px"></i><i class="tk" style="left:299.3px;height:3px"></i><i class="tk" style="left:306.6px;height:3px"></i><i class="tk" style="left:313.9px;height:3px"></i><i class="tk" style="left:321.2px;height:3px"></i><i class="tk" style="left:328.5px;height:5px"></i><i class="tk" style="left:335.8px;height:3px"></i><i class="tk" style="left:343.1px;height:3px"></i><i class="tk" style="left:350.4px;height:3px"></i><i class="tk" style="left:357.7px;height:3px"></i><i class="tk ts" style="left:365px;height:7px"></i><i class="tk ts" style="left:372.3px;height:3px"></i><i class="tk ts" style="left:379.6px;height:3px"></i><i class="tk ts" style="left:386.9px;height:3px"></i><i class="tk ts" style="left:394.2px;height:3px"></i><i class="tk ts" style="left:401.5px;height:5px"></i><i class="tk ts" style="left:408.8px;height:3px"></i><i class="tk ts" style="left:416.1px;height:3px"></i><i class="tk ts" style="left:423.4px;height:3px"></i><i class="tk ts" style="left:430.7px;height:3px"></i><i class="tk ts" style="left:438px;height:7px"></i><i class="tk ts" style="left:445.3px;height:3px"></i><i class="tk ts" style="left:452.6px;height:3px"></i><i class="tk ts" style="left:459.9px;height:3px"></i><i class="tk ts" style="left:467.2px;height:3px"></i><i class="tk ts" style="left:474.5px;height:5px"></i><i class="tk ts" style="left:481.8px;height:3px"></i><i class="tk ts" style="left:489.1px;height:3px"></i><i class="tk ts" style="left:496.4px;height:3px"></i><i class="tk ts" style="left:503.7px;height:3px"></i><i class="tk ts" style="left:511px;height:7px"></i><i class="tk ts" style="left:518.3px;height:3px"></i><i class="tk ts" style="left:525.6px;height:3px"></i><i class="tk ts" style="left:532.9px;height:3px"></i><i class="tk ts" style="left:540.2px;height:3px"></i><i class="tk ts" style="left:547.5px;height:5px"></i><i class="tk ts" style="left:554.8px;height:3px"></i><i class="tk" style="left:562.1px;height:3px"></i><i class="tk" style="left:569.4px;height:3px"></i><i class="tk" style="left:576.7px;height:3px"></i><i class="tk" style="left:584px;height:7px"></i><i class="tk" style="left:591.3px;height:3px"></i><i class="tk" style="left:598.6px;height:3px"></i><i class="tk" style="left:605.9px;height:3px"></i><i class="tk" style="left:613.2px;height:3px"></i><i class="tk" style="left:620.5px;height:5px"></i><i class="tk" style="left:627.8px;height:3px"></i><i class="tk" style="left:635.1px;height:3px"></i><i class="tk" style="left:642.4px;height:3px"></i><i class="tk" style="left:649.7px;height:3px"></i><i class="tk" style="left:657px;height:7px"></i><i class="tk" style="left:664.3px;height:3px"></i><i class="tk" style="left:671.6px;height:3px"></i><i class="tk" style="left:678.9px;height:3px"></i><i class="tk" style="left:686.2px;height:3px"></i><i class="tk" style="left:693.5px;height:5px"></i><i class="tk" style="left:700.8px;height:3px"></i><i class="tk" style="left:708.1px;height:3px"></i><i class="tk" style="left:715.4px;height:3px"></i><i class="tk" style="left:722.7px;height:3px"></i><i class="tk" style="left:730px;height:7px"></i><i class="tk" style="left:737.3px;height:3px"></i><i class="tk" style="left:744.6px;height:3px"></i><i class="tk" style="left:751.9px;height:3px"></i><i class="tk" style="left:759.2px;height:3px"></i><i class="tk" style="left:766.5px;height:5px"></i><i class="tk" style="left:773.8px;height:3px"></i><i class="tk" style="left:781.1px;height:3px"></i><span class="rl" style="left:58px">0:01</span><span class="rl" style="left:131px">0:02</span><span class="rl" style="left:204px">0:03</span><span class="rl" style="left:277px">0:04</span><span class="rl" style="left:350px">0:05</span><span class="rl rs" style="left:423px">0:06</span><span class="rl rs" style="left:496px">0:07</span><span class="rl" style="left:569px">0:08</span><span class="rl" style="left:642px">0:09</span><span class="rl" style="left:715px">0:10</span><span class="rl rs" style="left:350px;clip-path:inset(0 0 0 15.5px)">0:05</span></div><i id="sely"></i><i class="gl" style="left:73px"></i><i class="gl" style="left:146px"></i><i class="gl" style="left:219px"></i><i class="gl" style="left:292px"></i><i class="gl" style="left:365px"></i><i class="gl gs" style="left:438px"></i><i class="gl gs" style="left:511px"></i><i class="gl" style="left:584px"></i><i class="gl" style="left:657px"></i><i class="gl" style="left:730px"></i><div class="th" style="left:3px"><svg width="114.6" height="77" viewBox="0 0 114.6 77" font-family="Liberation Sans, sans-serif"><rect width="114.6" height="77" fill="#fff"/><rect x=".5" y="1.5" width="6.5" height="4" fill="#d24726"/><path d="M9.5 3.6h4" stroke="#b9b9b9" stroke-width="1"/><path d="M16.5 3.6h4" stroke="#b9b9b9" stroke-width="1"/><path d="M23.5 3.6h5" stroke="#b9b9b9" stroke-width="1"/><path d="M31.5 3.6h8.5" stroke="#b9b9b9" stroke-width="1"/><path d="M43 3.6h8" stroke="#b9b9b9" stroke-width="1"/><path d="M54 3.6h8" stroke="#b9b9b9" stroke-width="1"/><path d="M65 3.6h5" stroke="#b9b9b9" stroke-width="1"/><path d="M73 3.6h3.5" stroke="#b9b9b9" stroke-width="1"/><path d="M79.5 3.6h11" stroke="#b9b9b9" stroke-width="1"/><path d="M99 3.6h9" stroke="#cfcfcf" stroke-width="1"/><rect x="111.5" y="2" width="2" height="3" fill="#777"/><rect x="0" y="6" width="24" height="71" fill="#f7f7f7"/><rect x="22" y="6" width="2" height="71" fill="#ececec"/><rect x="8" y="16" width="10" height="6" fill="#9db9d6"/><rect x="8" y="19.6" width="10" height="2.4" fill="#34465c"/><rect x="12" y="31.5" width="5" height="3.5" fill="#6d88a6"/><rect x="12" y="33.6" width="5" height="1.4" fill="#44586e"/><rect x="4" y="42" width="16" height="12" fill="#fff" stroke="#ead9cc" stroke-width=".5"/><rect x="3.5" y="59" width="17" height="14" fill="#fff" stroke="#f0b9a0" stroke-width=".8"/><rect x="8" y="62" width="10.5" height="8.5" fill="#4c86c8"/><rect x="8" y="67.1" width="10.5" height="3.4" fill="#27364a"/><rect x="26.5" y="8" width="86" height="66" fill="#fff"/><text x="29" y="19.8" font-size="3.4" font-weight="700" fill="#444" textLength="14" lengthAdjust="spacingAndGlyphs">Coastline</text><path d="M29 22.5H48.5" stroke="#c6c6c6" stroke-width="0.9"/><path d="M29 24.9H47.9" stroke="#c6c6c6" stroke-width="0.9"/><path d="M29 27.4H45.9" stroke="#c6c6c6" stroke-width="0.9"/><path d="M29 29.8H48.4" stroke="#c6c6c6" stroke-width="0.9"/><path d="M29 32.3H48.2" stroke="#c6c6c6" stroke-width="0.9"/><path d="M29 34.8H47.8" stroke="#c6c6c6" stroke-width="0.9"/><path d="M29 37.2H50" stroke="#c6c6c6" stroke-width="0.9"/><path d="M29 39.7H48.2" stroke="#c6c6c6" stroke-width="0.9"/><path d="M29 42.1H47.5" stroke="#c6c6c6" stroke-width="0.9"/><path d="M29 44.6H46.6" stroke="#c6c6c6" stroke-width="0.9"/><path d="M29 50H50.5" stroke="#c6c6c6" stroke-width="0.9"/><path d="M29 52.5H49.3" stroke="#c6c6c6" stroke-width="0.9"/><path d="M29 54.9H50.5" stroke="#c6c6c6" stroke-width="0.9"/><path d="M29 57.4H46.5" stroke="#c6c6c6" stroke-width="0.9"/><path d="M29 59.8H47.2" stroke="#c6c6c6" stroke-width="0.9"/><path d="M29 62.3H50.8" stroke="#c6c6c6" stroke-width="0.9"/><path d="M29 64.7H45.6" stroke="#c6c6c6" stroke-width="0.9"/><path d="M29 67.2H45.7" stroke="#c6c6c6" stroke-width="0.9"/><defs><linearGradient id="skm0" x1="0" y1="0" x2="0" y2="1"><stop offset="0" stop-color="#2c66b2"/><stop offset=".45" stop-color="#5f93cf"/><stop offset=".72" stop-color="#bdd2e8"/><stop offset=".8" stop-color="#8fa3ba"/><stop offset="1" stop-color="#5f7790"/></linearGradient></defs><rect x="56.3" y="16.8" width="52.5" height="44.5" fill="url(#skm0)"/><path d="M56.3 61.3V54.2L65.8 52.4L78.3 52.4L85.2 56.9L88.8 61.3z" fill="#141c28"/><rect x="87.8" y="52.4" width="21" height="4.5" fill="#dfe8f0" opacity=".75"/><rect x="66.8" y="49.3" width=".6" height="3.6" fill="#141c28"/><path d="M57 64h45" stroke="#e2e2e2" stroke-width=".7"/><rect x=".5" y=".5" width="113.6" height="76" fill="none" stroke="#808080" stroke-width="1"/></svg></div><div class="th" style="left:121.6px"><svg width="114.6" height="77" viewBox="0 0 114.6 77" font-family="Liberation Sans, sans-serif"><rect width="114.6" height="77" fill="#fff"/><rect x=".5" y="1.5" width="6.5" height="4" fill="#d24726"/><path d="M9.5 3.6h4" stroke="#b9b9b9" stroke-width="1"/><path d="M16.5 3.6h4" stroke="#b9b9b9" stroke-width="1"/><path d="M23.5 3.6h5" stroke="#b9b9b9" stroke-width="1"/><path d="M31.5 3.6h8.5" stroke="#b9b9b9" stroke-width="1"/><path d="M43 3.6h8" stroke="#b9b9b9" stroke-width="1"/><path d="M54 3.6h8" stroke="#b9b9b9" stroke-width="1"/><path d="M65 3.6h5" stroke="#b9b9b9" stroke-width="1"/><path d="M73 3.6h3.5" stroke="#b9b9b9" stroke-width="1"/><path d="M79.5 3.6h11" stroke="#b9b9b9" stroke-width="1"/><path d="M99 3.6h9" stroke="#cfcfcf" stroke-width="1"/><rect x="111.5" y="2" width="2" height="3" fill="#777"/><rect x="0" y="6" width="24" height="71" fill="#f7f7f7"/><rect x="22" y="6" width="2" height="71" fill="#ececec"/><rect x="8" y="16" width="10" height="6" fill="#9db9d6"/><rect x="8" y="19.6" width="10" height="2.4" fill="#34465c"/><rect x="12" y="31.5" width="5" height="3.5" fill="#6d88a6"/><rect x="12" y="33.6" width="5" height="1.4" fill="#44586e"/><rect x="4" y="42" width="16" height="12" fill="#fff" stroke="#ead9cc" stroke-width=".5"/><rect x="3.5" y="59" width="17" height="14" fill="#fff" stroke="#f0b9a0" stroke-width=".8"/><rect x="8" y="62" width="10.5" height="8.5" fill="#4c86c8"/><rect x="8" y="67.1" width="10.5" height="3.4" fill="#27364a"/><rect x="26.5" y="8" width="86" height="66" fill="#fff"/><text x="29" y="19.8" font-size="3.4" font-weight="700" fill="#444" textLength="14" lengthAdjust="spacingAndGlyphs">Coastline</text><path d="M29 22.5H47.4" stroke="#c6c6c6" stroke-width="0.9"/><path d="M29 24.9H47.6" stroke="#c6c6c6" stroke-width="0.9"/><path d="M29 27.4H50.1" stroke="#c6c6c6" stroke-width="0.9"/><path d="M29 29.8H50.9" stroke="#c6c6c6" stroke-width="0.9"/><path d="M29 32.3H48.1" stroke="#c6c6c6" stroke-width="0.9"/><path d="M29 34.8H50.7" stroke="#c6c6c6" stroke-width="0.9"/><path d="M29 37.2H50" stroke="#c6c6c6" stroke-width="0.9"/><path d="M29 39.7H49.7" stroke="#c6c6c6" stroke-width="0.9"/><path d="M29 42.1H50.8" stroke="#c6c6c6" stroke-width="0.9"/><path d="M29 44.6H48.4" stroke="#c6c6c6" stroke-width="0.9"/><path d="M29 50H48.6" stroke="#c6c6c6" stroke-width="0.9"/><path d="M29 52.5H46.4" stroke="#c6c6c6" stroke-width="0.9"/><path d="M29 54.9H48.1" stroke="#c6c6c6" stroke-width="0.9"/><path d="M29 57.4H47.5" stroke="#c6c6c6" stroke-width="0.9"/><path d="M29 59.8H48.3" stroke="#c6c6c6" stroke-width="0.9"/><path d="M29 62.3H47.4" stroke="#c6c6c6" stroke-width="0.9"/><path d="M29 64.7H48.5" stroke="#c6c6c6" stroke-width="0.9"/><path d="M29 67.2H49.5" stroke="#c6c6c6" stroke-width="0.9"/><defs><linearGradient id="skm1" x1="0" y1="0" x2="0" y2="1"><stop offset="0" stop-color="#2c66b2"/><stop offset=".45" stop-color="#5f93cf"/><stop offset=".72" stop-color="#bdd2e8"/><stop offset=".8" stop-color="#8fa3ba"/><stop offset="1" stop-color="#5f7790"/></linearGradient></defs><rect x="56.3" y="16.8" width="52.5" height="44.5" fill="url(#skm1)"/><path d="M56.3 61.3V54.2L65.8 52.4L78.3 52.4L85.2 56.9L88.8 61.3z" fill="#141c28"/><rect x="87.8" y="52.4" width="21" height="4.5" fill="#dfe8f0" opacity=".75"/><rect x="66.8" y="49.3" width=".6" height="3.6" fill="#141c28"/><path d="M57 64h45" stroke="#e2e2e2" stroke-width=".7"/><rect x=".5" y=".5" width="113.6" height="76" fill="none" stroke="#808080" stroke-width="1"/></svg></div><div class="th" style="left:240.1px"><svg width="114.6" height="77" viewBox="0 0 114.6 77" font-family="Liberation Sans, sans-serif"><rect width="114.6" height="77" fill="#fff"/><rect x=".5" y="1.5" width="6.5" height="4" fill="#d24726"/><path d="M9.5 3.6h4" stroke="#b9b9b9" stroke-width="1"/><path d="M16.5 3.6h4" stroke="#b9b9b9" stroke-width="1"/><path d="M23.5 3.6h5" stroke="#b9b9b9" stroke-width="1"/><path d="M31.5 3.6h8.5" stroke="#b9b9b9" stroke-width="1"/><path d="M43 3.6h8" stroke="#b9b9b9" stroke-width="1"/><path d="M54 3.6h8" stroke="#b9b9b9" stroke-width="1"/><path d="M65 3.6h5" stroke="#b9b9b9" stroke-width="1"/><path d="M73 3.6h3.5" stroke="#b9b9b9" stroke-width="1"/><path d="M79.5 3.6h11" stroke="#b9b9b9" stroke-width="1"/><path d="M99 3.6h9" stroke="#cfcfcf" stroke-width="1"/><rect x="111.5" y="2" width="2" height="3" fill="#777"/><rect x="0" y="6" width="24" height="71" fill="#f7f7f7"/><rect x="22" y="6" width="2" height="71" fill="#ececec"/><rect x="3" y="8.5" width="15.5" height="12" fill="#6e8fae"/><rect x="3" y="15.7" width="15.5" height="4.8" fill="#1f3248"/><circle cx="11" cy="31.5" r="4.5" fill="#1373ba"/><circle cx="11" cy="30" r="4.8" fill="none" stroke="#c9d6e4" stroke-width=".8"/><path d="M7 30a4 4 0 0 1 8 0z" fill="#dfe6ee"/><rect x="4" y="41" width="15" height="9" fill="#fff" stroke="#e6e6e6" stroke-width=".5"/><path d="M5 43H14" stroke="#dcdcdc" stroke-width="0.7"/><path d="M5 45H14" stroke="#dcdcdc" stroke-width="0.7"/><path d="M5 47H14.5" stroke="#dcdcdc" stroke-width="0.7"/><path d="M5 49H14.9" stroke="#dcdcdc" stroke-width="0.7"/><rect x="8.5" y="55" width="10" height="5.5" fill="#8fb0cf"/><rect x="8.5" y="58.3" width="10" height="2.2" fill="#5a7088"/><rect x="11" y="73" width="5" height="4" fill="#334"/><rect x="11" y="75.4" width="5" height="1.6" fill="#223"/><rect x="26.5" y="8" width="86" height="66" fill="#fff"/><text x="29" y="19.8" font-size="3.4" font-weight="700" fill="#444" textLength="14" lengthAdjust="spacingAndGlyphs">Coastline</text><path d="M29 22.5H49.3" stroke="#c6c6c6" stroke-width="0.9"/><path d="M29 24.9H49.7" stroke="#c6c6c6" stroke-width="0.9"/><path d="M29 27.4H49.4" stroke="#c6c6c6" stroke-width="0.9"/><path d="M29 29.8H50.6" stroke="#c6c6c6" stroke-width="0.9"/><path d="M29 32.3H46.8" stroke="#c6c6c6" stroke-width="0.9"/><path d="M29 34.8H48.8" stroke="#c6c6c6" stroke-width="0.9"/><path d="M29 37.2H46.3" stroke="#c6c6c6" stroke-width="0.9"/><path d="M29 39.7H48.9" stroke="#c6c6c6" stroke-width="0.9"/><path d="M29 42.1H45.7" stroke="#c6c6c6" stroke-width="0.9"/><path d="M29 44.6H46.3" stroke="#c6c6c6" stroke-width="0.9"/><path d="M29 50H51" stroke="#c6c6c6" stroke-width="0.9"/><path d="M29 52.5H49.8" stroke="#c6c6c6" stroke-width="0.9"/><path d="M29 54.9H46" stroke="#c6c6c6" stroke-width="0.9"/><path d="M29 57.4H48.4" stroke="#c6c6c6" stroke-width="0.9"/><path d="M29 59.8H45.6" stroke="#c6c6c6" stroke-width="0.9"/><path d="M29 62.3H48.8" stroke="#c6c6c6" stroke-width="0.9"/><path d="M29 64.7H50.6" stroke="#c6c6c6" stroke-width="0.9"/><path d="M29 67.2H47.5" stroke="#c6c6c6" stroke-width="0.9"/><defs><linearGradient id="skm2" x1="0" y1="0" x2="0" y2="1"><stop offset="0" stop-color="#2c66b2"/><stop offset=".45" stop-color="#5f93cf"/><stop offset=".72" stop-color="#bdd2e8"/><stop offset=".8" stop-color="#8fa3ba"/><stop offset="1" stop-color="#5f7790"/></linearGradient></defs><rect x="56.3" y="16.8" width="52.5" height="44.5" fill="url(#skm2)"/><path d="M56.3 61.3V54.2L65.8 52.4L78.3 52.4L85.2 56.9L88.8 61.3z" fill="#141c28"/><rect x="87.8" y="52.4" width="21" height="4.5" fill="#dfe8f0" opacity=".75"/><rect x="66.8" y="49.3" width=".6" height="3.6" fill="#141c28"/><path d="M57 64h45" stroke="#e2e2e2" stroke-width=".7"/><rect x=".5" y=".5" width="113.6" height="76" fill="none" stroke="#808080" stroke-width="1"/></svg></div><div class="th" style="left:358.7px"><svg width="114.6" height="77" viewBox="0 0 114.6 77" font-family="Liberation Sans, sans-serif"><rect width="114.6" height="77" fill="#fff"/><rect x=".5" y="1.5" width="6.5" height="4" fill="#d24726"/><path d="M9.5 3.6h4" stroke="#b9b9b9" stroke-width="1"/><path d="M16.5 3.6h4" stroke="#b9b9b9" stroke-width="1"/><path d="M23.5 3.6h5" stroke="#b9b9b9" stroke-width="1"/><path d="M31.5 3.6h8.5" stroke="#b9b9b9" stroke-width="1"/><path d="M43 3.6h8" stroke="#b9b9b9" stroke-width="1"/><path d="M54 3.6h8" stroke="#b9b9b9" stroke-width="1"/><path d="M65 3.6h5" stroke="#b9b9b9" stroke-width="1"/><path d="M73 3.6h3.5" stroke="#b9b9b9" stroke-width="1"/><path d="M79.5 3.6h11" stroke="#b9b9b9" stroke-width="1"/><path d="M99 3.6h9" stroke="#cfcfcf" stroke-width="1"/><rect x="111.5" y="2" width="2" height="3" fill="#777"/><rect x="0" y="6" width="24" height="71" fill="#f7f7f7"/><rect x="22" y="6" width="2" height="71" fill="#ececec"/><rect x="3" y="8" width="17" height="13" fill="none" stroke="#e8693a" stroke-width=".8"/><rect x="3.8" y="8.8" width="15.4" height="11.4" fill="#6e8fae"/><rect x="3.8" y="15.6" width="15.4" height="4.6" fill="#1f3248"/><circle cx="11" cy="31" r="4.2" fill="#1373ba"/><circle cx="11" cy="30" r="4.8" fill="none" stroke="#c9d6e4" stroke-width=".8"/><path d="M7 30a4 4 0 0 1 8 0z" fill="#dfe6ee"/><path d="M5 44H14.7" stroke="#dcdcdc" stroke-width="0.7"/><path d="M5 46H16.2" stroke="#dcdcdc" stroke-width="0.7"/><path d="M5 48H16.7" stroke="#dcdcdc" stroke-width="0.7"/><path d="M5 50H16" stroke="#dcdcdc" stroke-width="0.7"/><path d="M5 52H14.1" stroke="#dcdcdc" stroke-width="0.7"/><rect x="8.5" y="60" width="10" height="5.5" fill="#8fb0cf"/><rect x="8.5" y="63.3" width="10" height="2.2" fill="#5a7088"/><defs><linearGradient id="osm3" x1="0" y1="0" x2="0" y2="1"><stop offset="0" stop-color="#5286bb"/><stop offset=".6" stop-color="#7fa6cb"/><stop offset="1" stop-color="#b4cadd"/></linearGradient><linearGradient id="oem3" x1="0" y1="0" x2="0" y2="1"><stop offset="0" stop-color="#5d81a2"/><stop offset=".35" stop-color="#46698b"/><stop offset=".7" stop-color="#35526e"/><stop offset="1" stop-color="#1f3044"/></linearGradient><filter id="obm3" x="-30%" y="-30%" width="160%" height="160%"><feGaussianBlur stdDeviation="1.9"/></filter><clipPath id="ocm3"><rect x="26.5" y="8" width="86.5" height="66"/></clipPath></defs><g clip-path="url(#ocm3)"><rect x="26.5" y="8" width="86.5" height="28.4" fill="url(#osm3)"/><rect x="26.5" y="35.7" width="86.5" height="38.3" fill="url(#oem3)"/><g filter="url(#obm3)"><ellipse cx="38.6" cy="35.7" rx="7.4" ry="13.2" fill="#e9eff5" opacity=".75"/><ellipse cx="45.5" cy="47.6" rx="8.7" ry="6.6" fill="#dfe8f0" opacity=".6"/><ellipse cx="80.1" cy="55.5" rx="23.4" ry="4.3" fill="#b8c9d8" opacity=".8"/><ellipse cx="97.4" cy="62.8" rx="17.3" ry="4.6" fill="#aebfd0" opacity=".75"/><ellipse cx="82.7" cy="42.3" rx="34.6" ry="2.3" fill="#8da6bd" opacity=".6"/><path d="M22.2 48.9L43.8 48.9L62.8 59.5L69.8 80.6L22.2 80.6z" fill="#111b28" opacity=".9"/></g><rect x="26.5" y="69.4" width="86.5" height="4.6" fill="#16212e" opacity=".55"/></g><text x="29" y="17.5" font-size="4.4" font-weight="700" fill="#eef3f8" textLength="30" lengthAdjust="spacingAndGlyphs">Earth's Oceans</text><path d="M30 57H55.9" stroke="#c9d4df" stroke-width="0.8"/><path d="M30 59.6H61.1" stroke="#c9d4df" stroke-width="0.8"/><path d="M30 62.2H60" stroke="#c9d4df" stroke-width="0.8"/><rect x=".5" y=".5" width="113.6" height="76" fill="none" stroke="#808080" stroke-width="1"/></svg></div><div class="th" style="left:477.3px"><svg width="114.6" height="77" viewBox="0 0 114.6 77" font-family="Liberation Sans, sans-serif"><rect width="114.6" height="77" fill="#fff"/><rect x=".5" y="1.5" width="6.5" height="4" fill="#d24726"/><path d="M9.5 3.6h4" stroke="#b9b9b9" stroke-width="1"/><path d="M16.5 3.6h4" stroke="#b9b9b9" stroke-width="1"/><path d="M23.5 3.6h5" stroke="#b9b9b9" stroke-width="1"/><path d="M31.5 3.6h8.5" stroke="#b9b9b9" stroke-width="1"/><path d="M43 3.6h8" stroke="#b9b9b9" stroke-width="1"/><path d="M54 3.6h8" stroke="#b9b9b9" stroke-width="1"/><path d="M65 3.6h5" stroke="#b9b9b9" stroke-width="1"/><path d="M73 3.6h3.5" stroke="#b9b9b9" stroke-width="1"/><path d="M79.5 3.6h11" stroke="#b9b9b9" stroke-width="1"/><path d="M99 3.6h9" stroke="#cfcfcf" stroke-width="1"/><rect x="111.5" y="2" width="2" height="3" fill="#777"/><rect x="0" y="6" width="24" height="71" fill="#f7f7f7"/><rect x="22" y="6" width="2" height="71" fill="#ececec"/><rect x="3" y="9" width="15.5" height="10" fill="#6e8fae"/><rect x="3" y="15" width="15.5" height="4" fill="#1f3248"/><rect x="2.5" y="23" width="17" height="13.5" fill="#fff" stroke="#e8693a" stroke-width=".8"/><circle cx="11" cy="30" r="4" fill="#1373ba"/><circle cx="11" cy="29.5" r="4.8" fill="none" stroke="#c9d6e4" stroke-width=".8"/><path d="M7.5 29a3.5 3.5 0 0 1 7 0z" fill="#dfe6ee"/><path d="M5 43H16.7" stroke="#dcdcdc" stroke-width="0.7"/><path d="M5 45H16.8" stroke="#dcdcdc" stroke-width="0.7"/><path d="M5 47H14.6" stroke="#dcdcdc" stroke-width="0.7"/><path d="M5 49H16.5" stroke="#dcdcdc" stroke-width="0.7"/><path d="M5 51H15.3" stroke="#dcdcdc" stroke-width="0.7"/><rect x="8.5" y="60" width="10" height="5.5" fill="#8fb0cf"/><rect x="8.5" y="63.3" width="10" height="2.2" fill="#5a7088"/><rect x="26.5" y="8" width="86" height="66" fill="#fff"/><text x="29" y="19.3" font-size="2.9" font-weight="700" fill="#555" textLength="22" lengthAdjust="spacingAndGlyphs">Oceanic Divisions</text><path d="M29 22.5H43.2" stroke="#d6d6d6" stroke-width="0.7"/><path d="M29 24.7H44.2" stroke="#d6d6d6" stroke-width="0.7"/><path d="M29 26.9H42.1" stroke="#d6d6d6" stroke-width="0.7"/><g transform="translate(69.5 41.5) scale(0.305) translate(-229 -137.5)"><path d="M208.7 218.8 A83.8 83.8 0 0 1 227.5 53.7" fill="none" stroke="#1868ad" stroke-width="3.8"/><path d="M231.2 53.7 A83.8 83.8 0 0 1 248.6 56" fill="none" stroke="#f3dfc9" stroke-width="3.4"/><path d="M251.4 56.7 A83.8 83.8 0 0 1 278.8 70.1" fill="none" stroke="#e8683a" stroke-width="3.4"/><path d="M281.2 71.9 A83.8 83.8 0 0 1 310.3 157.8" fill="none" stroke="#e1e5eb" stroke-width="2.2"/><path d="M309.6 160.6 A83.8 83.8 0 0 1 211.6 219.5" fill="none" stroke="#bac9da" stroke-width="3.2"/><defs><linearGradient id="g695b" x1="0" y1="0" x2="0" y2="1"><stop offset="0" stop-color="#0d80ca"/><stop offset="1" stop-color="#1565ad"/></linearGradient><clipPath id="g695c"><circle cx="229" cy="137.5" r="74.3"/></clipPath></defs><g clip-path="url(#g695c)"><path d="M163.5 102 C161.7 103 159.4 108.2 158 112 C156.6 115.8 155.6 120.3 155 125 C154.4 129.7 154.2 135 154.5 140 C154.8 145 155.4 150.3 156.5 155 C157.6 159.7 159.4 164.8 161 168 C162.6 171.2 164.5 174 166 174 C167.5 174 169.7 170.7 170 168 C170.3 165.3 167.9 161.3 168 158 C168.1 154.7 170.7 151.3 170.5 148 C170.3 144.7 167.2 141.7 167 138 C166.8 134.3 169.4 130 169.5 126 C169.6 122 167.6 117.3 167.5 114 C167.4 110.7 169.7 108 169 106 C168.3 104 165.3 101 163.5 102Z" fill="#f5e3d0" /><path d="M168.2 102.7 C169 100.2 172.6 100.5 175 98.2 C177.4 95.9 180.5 89.8 182.9 89.1 C185.3 88.3 187.2 93.6 189.7 93.7 C192.2 93.8 195.6 90.6 198 89.5 C200.4 88.4 202 86.9 204 87 C206 87.1 208.2 88.7 210 90 C211.8 91.3 213.3 93.9 215 95 C216.7 96.1 218.2 97.1 220.2 96.5 C222.2 95.9 223.6 91.9 227 91.4 C230.4 90.9 237.2 91.6 240.6 93.7 C244 95.8 245.7 100.7 247.4 103.9 C249.1 107.1 250.3 109.6 250.8 112.9 C251.3 116.2 251.8 120.8 250.5 124 C249.2 127.2 245.4 130.6 243 132 C240.6 133.4 238.6 132.7 236.1 132.2 C233.6 131.7 230.8 131.3 228.2 128.8 C225.5 126.3 222.5 120.1 220.2 117.4 C217.9 114.8 216.5 112.5 214.6 112.9 C212.7 113.3 211 116.5 208.9 119.7 C206.8 122.9 204.4 128.8 202.1 132.2 C199.8 135.6 197.4 139.4 195.3 140 C193.2 140.6 191.2 137.8 189.7 135.6 C188.2 133.3 188 127.3 186.3 126.5 C184.6 125.7 181.4 131.4 179.5 131 C177.6 130.6 176.5 127.2 175 124.2 C173.5 121.2 171.5 116.5 170.4 112.9 C169.3 109.3 167.4 105.2 168.2 102.7Z" fill="#a9bcd0" /><path d="M205 76 C206.2 74.5 210.2 71.4 214 70 C217.8 68.6 225.5 67.5 228 67.5 C230.5 67.5 231 69 229 70 C227 71 219.7 72 216 73.5 C212.3 75 208.8 78.6 207 79 C205.2 79.4 203.8 77.5 205 76Z" fill="#a9bcd0" /><path d="M197 90 L207 77 L210 78 L201 91Z" fill="#b4c5d6" /><path d="M249.7 77.8 C250.7 76.2 252.9 73.6 256 72.5 C259.1 71.4 264 70.4 268 71 C272 71.6 276 72.8 280 76 C284 79.2 288.7 84.7 292 90 C295.3 95.3 298 101.7 300 108 C302 114.3 303.4 122.3 304 128 C304.6 133.7 304.5 139 303.5 142 C302.5 145 300.2 143 298 146 C295.8 149 292.7 156.3 290 160 C287.3 163.7 284.5 165.2 282 168 C279.5 170.8 277.3 175 275 177 C272.7 179 270.2 181.2 268 180 C265.8 178.8 263.7 173.3 262 170 C260.3 166.7 258 163.3 258 160 C258 156.7 262 153.7 262 150 C262 146.3 259.7 142.3 258 138 C256.3 133.7 253.2 128.3 252 124 C250.8 119.7 251 115.7 251 112 C251 108.3 251.5 106 252 101.6 C252.5 97.2 254.5 89.1 254.2 85.8 C253.9 82.5 250.8 83.3 250 82 C249.2 80.7 248.7 79.4 249.7 77.8Z" fill="#dfe3ea" /><path d="M257 160 C258 157.3 263.5 155.3 266 156 C268.5 156.7 271.3 160.7 272 164 C272.7 167.3 271 173.2 270 176 C269 178.8 267.7 181.7 266 181 C264.3 180.3 261.5 175.5 260 172 C258.5 168.5 256 162.7 257 160Z" fill="#f1ece6" /><path d="M176 174 C175.8 171.3 177.6 168.2 178.5 166 C179.4 163.8 179.8 163.6 181.7 160.6 C183.6 157.6 187 152 190 148 C193 144 196.6 139.4 199.9 136.8 C203.2 134.2 206.7 133.1 210 132.5 C213.3 131.9 216.7 132.7 220 133.4 C223.3 134.1 227 134.4 230 136.5 C233 138.6 235 143.4 238 146 C241 148.6 244.9 150.3 248 152 C251.1 153.7 254.8 154.2 256.5 156 C258.2 157.8 257.1 160.3 258 163 C258.9 165.7 260.4 168.8 262 172 C263.6 175.2 266.1 180.5 267.8 182 C269.5 183.5 270.5 182.1 272 181 C273.5 179.9 274.6 178 276.8 175.3 C279 172.6 282.6 168.9 285 165 C287.4 161.1 289 155.2 291 152 C293 148.8 295.6 146.1 297.2 145.8 C298.8 145.5 300.1 147.6 300.5 150 C300.9 152.4 300.6 156 299.5 160 C298.4 164 296.2 169.6 294 174 C291.8 178.4 289 182.8 286 186.6 C283 190.4 279.8 194 276 197 C272.2 200 268 202.6 263.3 204.7 C258.6 206.8 253.3 208.4 248 209.5 C242.7 210.6 236.6 211.3 231.6 211.5 C226.6 211.7 221.8 211.1 218 210.5 C214.2 209.9 212.3 209.3 209 208 C205.7 206.7 201.2 204.6 198 202.5 C194.8 200.4 192.2 198.1 189.7 195.7 C187.2 193.3 184.7 190.3 183 188 C181.3 185.7 180.7 184.3 179.5 182 C178.3 179.7 176.2 176.7 176 174Z" fill="url(#g695b)" /><path d="M262 186 L271 183 L277 185 L268 188Z" fill="#fff" /><path d="M280 186 L284 182 L284 190 L281 191Z" fill="#e6eff8" /><path d="M250 160 L257 155 L258 157 L251 162Z" fill="#cfe3f4" /></g><circle cx="250.5" cy="136.9" r="17.8" fill="#fff"/><circle cx="250.5" cy="136.9" r="15.6" fill="#e9673a"/><path d="M240 133.9 C240.4 132.1 241.8 129.3 243.5 127.9 C245.2 126.5 248.2 125.5 250.5 125.4 C252.8 125.3 255.6 125.8 257.5 127.4 C259.4 129 261.4 132.4 262 134.9 C262.6 137.4 262.1 140.3 261 142.4 C259.9 144.5 257.4 146.7 255.5 147.4 C253.6 148.2 250.8 147.8 249.5 146.9 C248.2 146 248.5 142.5 247.5 141.9 C246.5 141.3 244.6 143.9 243.5 143.4 C242.4 142.9 241.6 140.5 241 138.9 C240.4 137.3 239.6 135.7 240 133.9Z" fill="#fff" /></g><circle cx="31.5" cy="49" r="2.3" fill="#1467ae"/><path d="M29 54H39.6" stroke="#d0d0d0" stroke-width="0.7"/><path d="M29 56.2H38.2" stroke="#d0d0d0" stroke-width="0.7"/><path d="M29 58.4H39.7" stroke="#d0d0d0" stroke-width="0.7"/><path d="M29 60.6H38.8" stroke="#d0d0d0" stroke-width="0.7"/><circle cx="98" cy="17.5" r="2.3" fill="#dfe3ea"/><path d="M95.5 22.5H105.4" stroke="#d8d8d8" stroke-width="0.7"/><path d="M95.5 24.7H105.3" stroke="#d8d8d8" stroke-width="0.7"/><path d="M95.5 26.9H103.5" stroke="#d8d8d8" stroke-width="0.7"/><rect x="107" y="55" width="2.5" height="2.5" fill="#f6e3cf"/><path d="M98 56.2h7.5" stroke="#d6d6d6" stroke-width=".7"/><rect x="107" y="58.4" width="2.5" height="2.5" fill="#ec6b3c"/><path d="M98 59.6h7.5" stroke="#d6d6d6" stroke-width=".7"/><rect x="107" y="61.8" width="2.5" height="2.5" fill="#dfe4eb"/><path d="M98 63h7.5" stroke="#d6d6d6" stroke-width=".7"/><rect x="107" y="65.2" width="2.5" height="2.5" fill="#b6c7d9"/><path d="M98 66.4h7.5" stroke="#d6d6d6" stroke-width=".7"/><rect x="107" y="68.6" width="2.5" height="2.5" fill="#1467b0"/><path d="M98 69.8h7.5" stroke="#d6d6d6" stroke-width=".7"/><rect x=".5" y=".5" width="113.6" height="76" fill="none" stroke="#808080" stroke-width="1"/></svg></div><div class="th" style="left:595.8px"><svg width="114.6" height="77" viewBox="0 0 114.6 77" font-family="Liberation Sans, sans-serif"><rect width="114.6" height="77" fill="#fff"/><rect x=".5" y="1.5" width="6.5" height="4" fill="#d24726"/><path d="M9.5 3.6h4" stroke="#b9b9b9" stroke-width="1"/><path d="M16.5 3.6h4" stroke="#b9b9b9" stroke-width="1"/><path d="M23.5 3.6h5" stroke="#b9b9b9" stroke-width="1"/><path d="M31.5 3.6h8.5" stroke="#b9b9b9" stroke-width="1"/><path d="M43 3.6h8" stroke="#b9b9b9" stroke-width="1"/><path d="M54 3.6h8" stroke="#b9b9b9" stroke-width="1"/><path d="M65 3.6h5" stroke="#b9b9b9" stroke-width="1"/><path d="M73 3.6h3.5" stroke="#b9b9b9" stroke-width="1"/><path d="M79.5 3.6h11" stroke="#b9b9b9" stroke-width="1"/><path d="M99 3.6h9" stroke="#cfcfcf" stroke-width="1"/><rect x="111.5" y="2" width="2" height="3" fill="#777"/><rect x="0" y="6" width="24" height="71" fill="#f7f7f7"/><rect x="22" y="6" width="2" height="71" fill="#ececec"/><rect x="4" y="9" width="14" height="10" fill="#86a3bf"/><rect x="4" y="15" width="14" height="4" fill="#2a3e55"/><circle cx="11" cy="30" r="3.8" fill="#4a93cf"/><circle cx="11" cy="29.5" r="4.5" fill="none" stroke="#d5dfea" stroke-width=".8"/><rect x="3" y="39" width="17" height="14" fill="#fff" stroke="#ee9a78" stroke-width=".8"/><path d="M5 42H15.4" stroke="#e3cfc4" stroke-width="0.7"/><path d="M5 44H17" stroke="#e3cfc4" stroke-width="0.7"/><path d="M5 46H15.1" stroke="#e3cfc4" stroke-width="0.7"/><path d="M5 48H17.3" stroke="#e3cfc4" stroke-width="0.7"/><path d="M5 50H16.7" stroke="#e3cfc4" stroke-width="0.7"/><rect x="8.5" y="59.5" width="10" height="6" fill="#8fb0cf"/><rect x="8.5" y="63.1" width="10" height="2.4" fill="#5a7088"/><path d="M5 70H14.4" stroke="#e0e0e0" stroke-width="0.7"/><path d="M5 72H15.1" stroke="#e0e0e0" stroke-width="0.7"/><path d="M5 74H16.7" stroke="#e0e0e0" stroke-width="0.7"/><rect x="26.5" y="8" width="86" height="66" fill="#fff"/><text x="29.5" y="20" font-size="3.4" font-weight="700" fill="#444" textLength="21" lengthAdjust="spacingAndGlyphs">Oceanic Zones</text><path d="M29.5 23.5H63.6" stroke="#b4b4b4" stroke-width="0.9"/><path d="M29.5 25.9H65.9" stroke="#b4b4b4" stroke-width="0.9"/><path d="M29.5 28.4H65.7" stroke="#b4b4b4" stroke-width="0.9"/><path d="M29.5 30.8H64.2" stroke="#b4b4b4" stroke-width="0.9"/><path d="M29.5 35H65.5" stroke="#b4b4b4" stroke-width="0.9"/><path d="M29.5 37.5H65.6" stroke="#b4b4b4" stroke-width="0.9"/><path d="M29.5 39.9H66.3" stroke="#b4b4b4" stroke-width="0.9"/><path d="M29.5 42.4H66.2" stroke="#b4b4b4" stroke-width="0.9"/><path d="M29.5 44.8H64.8" stroke="#b4b4b4" stroke-width="0.9"/><path d="M29.5 47.3H65.8" stroke="#b4b4b4" stroke-width="0.9"/><path d="M29.5 49.7H64.7" stroke="#b4b4b4" stroke-width="0.9"/><path d="M29.5 52.2H65.4" stroke="#b4b4b4" stroke-width="0.9"/><path d="M29.5 54.6H65.2" stroke="#b4b4b4" stroke-width="0.9"/><path d="M29.5 57.1H63.7" stroke="#b4b4b4" stroke-width="0.9"/><path d="M29.5 59.5H65.1" stroke="#b4b4b4" stroke-width="0.9"/><path d="M29.5 62H64.8" stroke="#b4b4b4" stroke-width="0.9"/><path d="M29.5 64.4H63.9" stroke="#b4b4b4" stroke-width="0.9"/><path d="M69.5 23.5H107.4" stroke="#b4b4b4" stroke-width="0.9"/><path d="M69.5 25.9H107.5" stroke="#b4b4b4" stroke-width="0.9"/><path d="M69.5 28.4H105.2" stroke="#b4b4b4" stroke-width="0.9"/><path d="M69.5 30.8H105.5" stroke="#b4b4b4" stroke-width="0.9"/><path d="M69.5 33.3H107.2" stroke="#b4b4b4" stroke-width="0.9"/><path d="M69.5 35.8H107.4" stroke="#b4b4b4" stroke-width="0.9"/><path d="M69.5 38.2H105.7" stroke="#b4b4b4" stroke-width="0.9"/><path d="M69.5 40.7H105.1" stroke="#b4b4b4" stroke-width="0.9"/><path d="M69.5 43.1H107.4" stroke="#b4b4b4" stroke-width="0.9"/><path d="M69.5 45.6H105.1" stroke="#b4b4b4" stroke-width="0.9"/><path d="M69.5 51H105.3" stroke="#b4b4b4" stroke-width="0.9"/><path d="M69.5 53.5H106.1" stroke="#b4b4b4" stroke-width="0.9"/><path d="M69.5 55.9H106.7" stroke="#b4b4b4" stroke-width="0.9"/><path d="M69.5 58.4H107.7" stroke="#b4b4b4" stroke-width="0.9"/><path d="M69.5 60.8H107.9" stroke="#b4b4b4" stroke-width="0.9"/><path d="M69.5 63.3H105" stroke="#b4b4b4" stroke-width="0.9"/><rect x=".5" y=".5" width="113.6" height="76" fill="none" stroke="#808080" stroke-width="1"/></svg></div><div class="th" style="left:714.4px"><svg width="114.6" height="77" viewBox="0 0 114.6 77" font-family="Liberation Sans, sans-serif"><rect width="114.6" height="77" fill="#fff"/><rect x=".5" y="1.5" width="6.5" height="4" fill="#d24726"/><path d="M9.5 3.6h4" stroke="#b9b9b9" stroke-width="1"/><path d="M16.5 3.6h4" stroke="#b9b9b9" stroke-width="1"/><path d="M23.5 3.6h5" stroke="#b9b9b9" stroke-width="1"/><path d="M31.5 3.6h8.5" stroke="#b9b9b9" stroke-width="1"/><path d="M43 3.6h8" stroke="#b9b9b9" stroke-width="1"/><path d="M54 3.6h8" stroke="#b9b9b9" stroke-width="1"/><path d="M65 3.6h5" stroke="#b9b9b9" stroke-width="1"/><path d="M73 3.6h3.5" stroke="#b9b9b9" stroke-width="1"/><path d="M79.5 3.6h11" stroke="#b9b9b9" stroke-width="1"/><path d="M99 3.6h9" stroke="#cfcfcf" stroke-width="1"/><rect x="111.5" y="2" width="2" height="3" fill="#777"/><rect x="0" y="6" width="24" height="71" fill="#f7f7f7"/><rect x="22" y="6" width="2" height="71" fill="#ececec"/><rect x="2.5" y="16" width="17.5" height="13" fill="#fff" stroke="#f0b9a0" stroke-width=".8"/><rect x="9" y="19.5" width="9.5" height="5" fill="#5f8fc5"/><rect x="9" y="22.5" width="9.5" height="2" fill="#3c5068"/><rect x="11.5" y="39" width="5" height="4" fill="#40566e"/><rect x="11.5" y="41.4" width="5" height="1.6" fill="#2a3a4c"/><path d="M5 52H17.2" stroke="#e0e0e0" stroke-width="0.7"/><path d="M5 54H15.7" stroke="#e0e0e0" stroke-width="0.7"/><path d="M5 56H17.2" stroke="#e0e0e0" stroke-width="0.7"/><path d="M5 58H15.3" stroke="#e0e0e0" stroke-width="0.7"/><rect x="8.5" y="66" width="10" height="9" fill="#4c80ba"/><rect x="8.5" y="71.4" width="10" height="3.6" fill="#1f2d3f"/><rect x="26.5" y="8" width="90" height="66" fill="#fff"/><text x="29.5" y="20" font-size="3.4" font-weight="700" fill="#444" textLength="16" lengthAdjust="spacingAndGlyphs">Wind Wave</text><path d="M29.5 23.5H52.2" stroke="#b8b8b8" stroke-width="0.9"/><path d="M29.5 25.9H53.1" stroke="#b8b8b8" stroke-width="0.9"/><path d="M29.5 28.4H53.5" stroke="#b8b8b8" stroke-width="0.9"/><path d="M29.5 30.8H51.9" stroke="#b8b8b8" stroke-width="0.9"/><path d="M29.5 33.3H53.8" stroke="#b8b8b8" stroke-width="0.9"/><path d="M29.5 35.8H53.3" stroke="#b8b8b8" stroke-width="0.9"/><path d="M29.5 38.2H52.4" stroke="#b8b8b8" stroke-width="0.9"/><path d="M29.5 40.7H51.5" stroke="#b8b8b8" stroke-width="0.9"/><path d="M29.5 43.1H52.2" stroke="#b8b8b8" stroke-width="0.9"/><path d="M29.5 45.6H53.2" stroke="#b8b8b8" stroke-width="0.9"/><path d="M29.5 48H51.3" stroke="#b8b8b8" stroke-width="0.9"/><defs><linearGradient id="wwm6" x1="0" y1="0" x2="0" y2="1"><stop offset="0" stop-color="#30507a"/><stop offset=".5" stop-color="#7fa3c9"/><stop offset=".7" stop-color="#27384c"/><stop offset="1" stop-color="#4a6a8c"/></linearGradient></defs><rect x="56.5" y="17" width="12" height="31" fill="url(#wwm6)"/><path d="M29.5 59H64.1" stroke="#c4c4c4" stroke-width="0.9"/><path d="M29.5 61.5H65.8" stroke="#c4c4c4" stroke-width="0.9"/><path d="M29.5 63.9H63.5" stroke="#c4c4c4" stroke-width="0.9"/><rect x=".5" y=".5" width="113.6" height="76" fill="none" stroke="#808080" stroke-width="1"/></svg></div><svg style="left:1px;top:126px" width="781" height="40" viewBox="0 -20 781 40"><clipPath id="wsel"><rect x="365" y="-20" width="194" height="40"/></clipPath><path d="M0 -6.9L1 -6.3L2 -7.8L3 -7.6L4 -8.1L5 -9.4L6 -10.8L7 -9L8 -6.1L9 -6.2L10 -6.5L11 -7.9L12 -6.4L13 -7.8L14 -7.7L15 -7.2L16 -6.3L17 -7.3L18 -7.8L19 -7.3L20 -7.4L21 -6.9L22 -8.2L23 -9.1L24 -9.6L25 -9.1L26 -7.9L27 -7.1L28 -6.1L29 -6.9L30 -8.1L31 -7L32 -6.8L33 -7.9L34 -9L35 -9.6L36 -10.2L37 -7.1L38 -7.4L39 -6.8L40 -6L41 -6.6L42 -6.5L43 -5.8L44 -6.9L45 -6.7L46 -6.8L47 -5.9L48 -7.3L49 -6.1L50 -7.5L51 -7.6L52 -5.5L53 -6.9L54 -5.4L55 -6.2L56 -5.5L57 -6.8L58 -5.6L59 -7.3L60 -5.4L61 -6.9L62 -6.7L63 -6.6L64 -9L65 -9L66 -5.3L67 -7.4L68 -6.9L69 -6.2L70 -7.2L71 -10L72 -8L73 -5.2L74 -7.1L75 -7.2L76 -6.1L77 -6.4L78 -8L79 -8.5L80 -8.7L81 -6.2L82 -5.5L83 -6.4L84 -6.2L85 -6.9L86 -7.6L87 -6.2L88 -6.8L89 -6.4L90 -7L91 -7.3L92 -5.6L93 -7.3L94 -6.5L95 -6.1L96 -5.9L97 -7.8L98 -6.9L99 -7L100 -7.2L101 -5.9L102 -7.5L103 -8L104 -6.9L105 -6.9L106 -5.9L107 -6.8L108 -7.9L109 -9.7L110 -7.1L111 -7.6L112 -7.9L113 -5.9L114 -8L115 -7.9L116 -6.9L117 -6.3L118 -7.9L119 -6.8L120 -7.6L121 -5.9L122 -6.7L123 -5.7L124 -5.8L125 -7.1L126 -6.1L127 -6.4L128 -6.7L129 -9.5L130 -10.7L131 -8.8L132 -6.7L133 -5.6L134 -7.5L135 -7.2L136 -5.2L137 -6L138 -5.2L139 -5L140 -6.4L141 -6.3L142 -5.9L143 -5.5L144 -6.6L145 -4.9L146 -6L147 -5L148 -5L149 -5.2L150 -6.7L151 -5.6L152 -6.4L153 -5.1L154 -6.2L155 -4.3L156 -5.2L157 -4.7L158 -4.1L159 -7.9L160 -8.9L161 -7.7L162 -5.2L163 -6L164 -4.8L165 -4.5L166 -4.7L167 -5.8L168 -4.5L169 -4.5L170 -4.6L171 -5L172 -4.9L173 -5L174 -5.4L175 -4.3L176 -6.5L177 -7.3L178 -7.4L179 -5.8L180 -5.1L181 -5.4L182 -4.2L183 -5.5L184 -5.5L185 -4.5L186 -5.3L187 -5L188 -5.4L189 -4.8L190 -5.4L191 -5.8L192 -6L193 -5.4L194 -5.6L195 -4.9L196 -6.8L197 -8.7L198 -8.9L199 -5.6L200 -4.5L201 -5.2L202 -6.3L203 -6.1L204 -9L205 -7.6L206 -5.6L207 -5.4L208 -6.4L209 -5.1L210 -6.6L211 -4.9L212 -6.7L213 -5.3L214 -5.7L215 -6.8L216 -5L217 -5.6L218 -6.4L219 -5.9L220 -4.9L221 -5.1L222 -5.7L223 -6.9L224 -5.8L225 -6.4L226 -6.5L227 -6.5L228 -5.1L229 -5.3L230 -7.4L231 -6.4L232 -5L233 -5.7L234 -6.4L235 -5.2L236 -5.1L237 -6.1L238 -6L239 -5.3L240 -6.6L241 -5.9L242 -5.2L243 -4.8L244 -7.5L245 -8.6L246 -9L247 -5.7L248 -4.6L249 -4.9L250 -5.4L251 -4.8L252 -4.2L253 -4.2L254 -5.7L255 -4.9L256 -5.3L257 -4.4L258 -4.2L259 -4L260 -4.9L261 -5.4L262 -5.8L263 -4.6L264 -3.8L265 -5.4L266 -5.7L267 -5.2L268 -4.5L269 -5.3L270 -4.7L271 -5.6L272 -5.2L273 -5.6L274 -6.8L275 -9.1L276 -9L277 -4.3L278 -4.4L279 -5.5L280 -6.1L281 -5L282 -6.2L283 -6.1L284 -5.3L285 -4.6L286 -6.4L287 -5.5L288 -6.1L289 -6.3L290 -5.6L291 -4.7L292 -4.5L293 -4.7L294 -6.6L295 -5.1L296 -6.2L297 -5.9L298 -5.1L299 -7L300 -6.7L301 -4.8L302 -5.1L303 -6.3L304 -5.9L305 -6.6L306 -6.8L307 -7.4L308 -7.1L309 -6.2L310 -7.3L311 -6.5L312 -7.4L313 -5.4L314 -7.5L315 -6.8L316 -6.2L317 -5.7L318 -6.6L319 -6.5L320 -7.3L321 -6.2L322 -6.6L323 -5.9L324 -9.4L325 -9.5L326 -9.1L327 -7.1L328 -5.8L329 -6.6L330 -6L331 -8.6L332 -7.5L333 -6.8L334 -10.9L335 -11.8L336 -11.2L337 -7.6L338 -7.1L339 -9.1L340 -8.2L341 -8.8L342 -6.9L343 -7.4L344 -8.7L345 -7L346 -8.9L347 -6.8L348 -7.3L349 -8.4L350 -12.9L351 -10.9L352 -8.1L353 -8L354 -8.8L355 -7.7L356 -6.5L357 -7.1L358 -8.3L359 -7L360 -6.9L361 -7.6L362 -8.4L363 -6.3L364 -8L365 -8.4L366 -6.6L367 -7.7L368 -7.7L369 -7.3L370 -8.1L371 -7.3L372 -6.4L373 -6.4L374 -6.5L375 -9.3L376 -9.2L377 -7.5L378 -8L379 -6.3L380 -7.1L381 -7L382 -7.8L383 -8.1L384 -7.2L385 -6.5L386 -6.7L387 -6.7L388 -7.2L389 -7.3L390 -7.9L391 -6.6L392 -7.6L393 -7.9L394 -7L395 -6.5L396 -6.1L397 -7.9L398 -6.4L399 -7.9L400 -6.7L401 -6.5L402 -6.9L403 -8.4L404 -12L405 -10.8L406 -7.1L407 -7.8L408 -7.3L409 -6.5L410 -8.1L411 -7.8L412 -7.6L413 -8.5L414 -8.4L415 -7.4L416 -7.9L417 -7.1L418 -7.7L419 -7.7L420 -8.3L421 -7.1L422 -8.4L423 -10L424 -11.1L425 -7.1L426 -7.6L427 -8.5L428 -6.8L429 -7.7L430 -8.9L431 -8.6L432 -6.9L433 -7.3L434 -7.1L435 -9L436 -10.9L437 -11.2L438 -8.4L439 -7.6L440 -7.2L441 -7.4L442 -6.7L443 -8.1L444 -8.5L445 -7.2L446 -8.7L447 -8.1L448 -8.7L449 -6.9L450 -6.5L451 -7.2L452 -8.1L453 -8.6L454 -8.9L455 -7.1L456 -7.5L457 -7.3L458 -6L459 -6.8L460 -8.3L461 -10.3L462 -10.2L463 -7.3L464 -6.8L465 -7.9L466 -6.9L467 -7.3L468 -6.9L469 -6.4L470 -7.3L471 -6.2L472 -6.5L473 -7.6L474 -7L475 -6.4L476 -5.6L477 -6.6L478 -6.5L479 -6.9L480 -5.7L481 -7L482 -6.5L483 -6.4L484 -6.7L485 -6.2L486 -6.1L487 -5.4L488 -6L489 -5.2L490 -5.1L491 -4.9L492 -6.4L493 -8.3L494 -8.5L495 -5.8L496 -5.5L497 -5.2L498 -5.4L499 -6.4L500 -6.6L501 -5.6L502 -6.1L503 -6.5L504 -5.5L505 -5.2L506 -4.7L507 -6.9L508 -5L509 -5.7L510 -5.7L511 -7.1L512 -6.5L513 -4.9L514 -6.6L515 -5.1L516 -4.9L517 -6L518 -5.6L519 -6.9L520 -5.9L521 -8.7L522 -9.9L523 -9L524 -5.3L525 -5.1L526 -5.4L527 -5.8L528 -6.3L529 -5.8L530 -7.4L531 -10.3L532 -10.1L533 -6.2L534 -6.6L535 -6.8L536 -7.5L537 -7.7L538 -7.3L539 -5.7L540 -5.7L541 -5.5L542 -7.1L543 -6.5L544 -5.8L545 -5.3L546 -7.2L547 -7.1L548 -7.2L549 -7.1L550 -5.5L551 -6.2L552 -5.8L553 -5.3L554 -5.7L555 -6.1L556 -7.1L557 -6.7L558 -7.2L559 -9.2L560 -9.1L561 -5.4L562 -6L563 -6.2L564 -5.7L565 -7.2L566 -7L567 -6.7L568 -7.2L569 -7.1L570 -5.8L571 -5.2L572 -6.3L573 -5.5L574 -5.5L575 -5L576 -5.5L577 -5.1L578 -6.7L579 -6L580 -5.9L581 -6.5L582 -5.6L583 -6.1L584 -7.1L585 -6.5L586 -4.8L587 -6.8L588 -5.1L589 -6.8L590 -9.2L591 -9L592 -9.1L593 -4.5L594 -6.1L595 -6.3L596 -5.7L597 -4.9L598 -7.6L599 -10.6L600 -8.8L601 -4.1L602 -4L603 -4.6L604 -5.8L605 -4.2L606 -5.9L607 -6L608 -6.3L609 -5.4L610 -5.7L611 -5.6L612 -4.1L613 -4.8L614 -4.8L615 -5.8L616 -4.5L617 -5.4L618 -4.6L619 -5.8L620 -4.9L621 -6.1L622 -7.7L623 -9.9L624 -9.4L625 -6.4L626 -6.1L627 -6.9L628 -6.9L629 -6L630 -5.9L631 -6.4L632 -5.2L633 -5.8L634 -7.4L635 -6.8L636 -5.8L637 -5.6L638 -5.9L639 -6.2L640 -7.4L641 -6.7L642 -7.6L643 -6.4L644 -7.3L645 -6.4L646 -7.9L647 -7.1L648 -6.5L649 -6.4L650 -8.1L651 -8.8L652 -10L653 -7.3L654 -8.1L655 -6.6L656 -6.7L657 -5.9L658 -7.3L659 -7.5L660 -7.7L661 -7.6L662 -6.8L663 -7.8L664 -7.9L665 -6.5L666 -7L667 -7.6L668 -6.9L669 -7L670 -5.8L671 -6.3L672 -6.2L673 -5.7L674 -6.6L675 -6.6L676 -5.7L677 -5.8L678 -6.7L679 -7.9L680 -7L681 -8.2L682 -5.6L683 -7.6L684 -7.3L685 -6.3L686 -5.9L687 -7.4L688 -6.4L689 -7.3L690 -6.5L691 -8.4L692 -7.8L693 -7.9L694 -7.1L695 -6.4L696 -6.1L697 -5.3L698 -5.8L699 -5.6L700 -6.2L701 -6L702 -5.1L703 -7.4L704 -6.5L705 -5.8L706 -6.5L707 -6.3L708 -6.9L709 -5.3L710 -5.8L711 -6.2L712 -6.1L713 -6.8L714 -8.6L715 -10.3L716 -10.2L717 -7.5L718 -5.3L719 -7.1L720 -5.4L721 -6.4L722 -7.8L723 -5.6L724 -6.5L725 -6.4L726 -6.6L727 -6.3L728 -5.8L729 -7.6L730 -7L731 -6L732 -8L733 -8L734 -6.8L735 -7.8L736 -7.9L737 -5.9L738 -6.8L739 -8.1L740 -7.6L741 -7.8L742 -7.8L743 -10.1L744 -11.1L745 -10L746 -7.2L747 -6.8L748 -6.6L749 -7.8L750 -6.7L751 -8.1L752 -7.8L753 -7.6L754 -8.4L755 -7.2L756 -6.6L757 -6.3L758 -8.1L759 -7.7L760 -7.3L761 -6.4L762 -7.8L763 -6.2L764 -6.5L765 -7.2L766 -6.2L767 -7.2L768 -8L769 -6.6L770 -7.5L771 -7.8L772 -6.3L773 -6.6L774 -8.8L775 -8.3L776 -5.9L777 -7.5L778 -6.7L779 -6.6L780 -9.1L781 -10.3L782 -8.6L782 8.5L781 8.5L780 8.6L779 6.9L778 7.1L777 6.9L776 7.5L775 8.5L774 8.3L773 7.8L772 6.3L771 7.4L770 6.4L769 8.1L768 7.5L767 8L766 7.7L765 7.4L764 6.4L763 7.8L762 7.9L761 8.3L760 6.8L759 7.4L758 6.1L757 6.8L756 7.9L755 7.2L754 8.3L753 7.4L752 7.1L751 7L750 6.2L749 7.5L748 6.7L747 7.7L746 8.4L745 10.8L744 11.5L743 9L742 6.4L741 6.2L740 6.9L739 7.1L738 7.5L737 6.9L736 7L735 6.1L734 7.1L733 6.2L732 7.1L731 6.4L730 5.9L729 7.2L728 5.9L727 7.3L726 5.8L725 6.6L724 7.3L723 7.3L722 7.6L721 7L720 7.1L719 6.7L718 7.5L717 6.8L716 8.4L715 9.7L714 8.2L713 5.4L712 5.8L711 7.2L710 7L709 5.7L708 5.2L707 6.3L706 5.8L705 6.5L704 6L703 5.9L702 6.5L701 7.4L700 5.1L699 6.9L698 6.2L697 6L696 5.6L695 6.4L694 5.3L693 7.8L692 8.1L691 7.3L690 6.4L689 7.5L688 6.8L687 6L686 5.5L685 5.5L684 5.4L683 6.9L682 6.1L681 6.7L680 7.3L679 8.3L678 6.4L677 7.8L676 7.5L675 7.5L674 6.9L673 6.1L672 6.6L671 7.5L670 6.8L669 5.9L668 5.9L667 6.4L666 5.9L665 7L664 5.8L663 8L662 5.8L661 6L660 7.5L659 6.3L658 7.2L657 6.1L656 7.5L655 6.1L654 6.2L653 6.2L652 7.7L651 9.8L650 8.9L649 7.3L648 6.7L647 6.7L646 5.6L645 7.7L644 7.1L643 6.4L642 5.7L641 5.7L640 6.8L639 7.3L638 6.3L637 7.4L636 6.2L635 6.8L634 5.8L633 6.1L632 6L631 6.1L630 6.7L629 7.1L628 6.5L627 5.5L626 5.4L625 5.2L624 8.9L623 9L622 7.4L621 6.2L620 6.8L619 5.2L618 6.6L617 4.6L616 5.9L615 4.6L614 5.6L613 5.6L612 4.9L611 5L610 4.4L609 6L608 4.4L607 4L606 5.3L605 4.7L604 4L603 5.8L602 3.8L601 4.6L600 8.2L599 10L598 6.3L597 5.1L596 6.5L595 5.5L594 5L593 6.5L592 9.4L591 10.8L590 7L589 5.4L588 6.2L587 6.2L586 5.5L585 7L584 7.2L583 6.1L582 6.1L581 6.1L580 4.8L579 5.7L578 6.6L577 6.1L576 6.2L575 6.2L574 7L573 5.1L572 7L571 5.4L570 6.5L569 5.3L568 5.9L567 5.1L566 5.7L565 5.4L564 6.2L563 5.9L562 5L561 5.9L560 9.3L559 10.8L558 8.6L557 6L556 6L555 6.8L554 6.1L553 6.6L552 7.4L551 6.9L550 7.5L549 7.6L548 7.3L547 6.2L546 7.2L545 6.6L544 7.6L543 5.3L542 6.1L541 6.2L540 5.6L539 5.4L538 7L537 6.3L536 7.3L535 5.9L534 6.8L533 5.4L532 9.5L531 10L530 9.2L529 5.3L528 6L527 5.7L526 6.6L525 6.4L524 5.8L523 11.3L522 10.6L521 9.4L520 6.4L519 5.6L518 6.8L517 5.8L516 6.2L515 5.6L514 7.2L513 5.5L512 5L511 4.9L510 7L509 6.2L508 6.3L507 7L506 6L505 5.1L504 6.2L503 4.9L502 6.6L501 6.3L500 5.9L499 6.6L498 5.4L497 6.3L496 6.3L495 6.5L494 8.6L493 8.8L492 6.2L491 4.8L490 5.9L489 5.4L488 5.2L487 6.5L486 5.6L485 5.9L484 5.2L483 7.1L482 6.5L481 5.6L480 5.7L479 7.3L478 6.3L477 6.3L476 6.2L475 6.1L474 8L473 9.1L472 6.7L471 7.5L470 7.5L469 6.1L468 6.4L467 7L466 7.8L465 6.5L464 7.1L463 6.1L462 11.2L461 9.7L460 7.5L459 6.1L458 6.9L457 7.7L456 7.7L455 6.5L454 8L453 9L452 7.9L451 6.4L450 7.4L449 7.9L448 8.5L447 8L446 7L445 8.1L444 8.9L443 7.9L442 6.7L441 7.1L440 7.3L439 8.7L438 7.7L437 10L436 12.9L435 9.7L434 8.2L433 6.8L432 7.7L431 8L430 7.5L429 6.9L428 7.5L427 8.9L426 8.6L425 9L424 10.7L423 10.5L422 9.9L421 7.6L420 8.7L419 9L418 7.3L417 7.1L416 6.9L415 7L414 7L413 7.4L412 7.4L411 8.5L410 8.5L409 7.2L408 7.9L407 6.4L406 8.6L405 10.7L404 11.2L403 8.1L402 7.2L401 7.1L400 8.3L399 6.2L398 7.2L397 8.4L396 7.2L395 8.3L394 6.9L393 6.1L392 8L391 6.3L390 6.3L389 6.1L388 6.6L387 7.4L386 6L385 6.3L384 7.8L383 7.3L382 6.1L381 6.5L380 7L379 6L378 6.4L377 8.8L376 8.5L375 9.1L374 7L373 7.5L372 7.9L371 8.3L370 7.7L369 7.3L368 8L367 7L366 7.5L365 7.4L364 7.1L363 7.3L362 8.6L361 6.7L360 7L359 8.1L358 6.6L357 7L356 7.8L355 7.7L354 7.5L353 6.7L352 7.2L351 10.7L350 12.2L349 8.6L348 8.3L347 7.1L346 7.7L345 8.3L344 8.4L343 8.8L342 8.4L341 6.8L340 7.2L339 7.2L338 8.8L337 7.8L336 11.7L335 10.6L334 9.7L333 6.8L332 8.1L331 7.6L330 8L329 6.6L328 6.4L327 8.1L326 6.9L325 8L324 8.5L323 7.9L322 6.2L321 6.4L320 6.9L319 5.7L318 6.7L317 5.8L316 6.9L315 7.2L314 7.1L313 7.1L312 6L311 6.3L310 6.4L309 6.5L308 6.1L307 7L306 6.1L305 6.7L304 6.4L303 5.9L302 7.1L301 6.3L300 7.6L299 7.7L298 5.5L297 6.4L296 5.4L295 6L294 5.9L293 6.7L292 4.3L291 5.5L290 6.2L289 4.7L288 4.8L287 4.4L286 6L285 6.2L284 5.3L283 5.2L282 4.2L281 4.2L280 4.7L279 4.6L278 5.2L277 4L276 7.2L275 10L274 6.2L273 5.9L272 4.1L271 5.7L270 5L269 4L268 4.6L267 3.8L266 5.3L265 6.1L264 4.7L263 4.8L262 4.7L261 5.7L260 5.1L259 6.1L258 4.9L257 4.3L256 4.1L255 5.9L254 4.4L253 5.6L252 4.3L251 6L250 5.8L249 6.4L248 5.9L247 4.8L246 8.5L245 9.7L244 6.3L243 5.6L242 6L241 4.3L240 6.3L239 5.4L238 4.6L237 5.2L236 5.5L235 4.6L234 5.2L233 4.8L232 5.8L231 7.8L230 8.3L229 6.3L228 6.2L227 4.7L226 6.5L225 4.5L224 4.9L223 5.1L222 6L221 6.6L220 5.3L219 4.9L218 6.2L217 5.4L216 4.5L215 6L214 5.1L213 5.7L212 6.3L211 4.5L210 5.5L209 5.6L208 6.5L207 4.9L206 6.2L205 7L204 8.7L203 6.3L202 4.2L201 5.5L200 4.2L199 5.9L198 6.5L197 8.6L196 7.8L195 4.9L194 5.8L193 5.1L192 6.1L191 5.8L190 5.8L189 5.8L188 5.9L187 5.5L186 4.9L185 6L184 4.6L183 4.9L182 4.2L181 5.2L180 4L179 3.8L178 6.2L177 8.1L176 6.8L175 3.7L174 5.7L173 4L172 5.6L171 5.5L170 4.1L169 4.6L168 4.6L167 4.3L166 6L165 4.5L164 5.7L163 6L162 6L161 7.3L160 8.1L159 6.9L158 4.5L157 5.9L156 5.7L155 5.4L154 4.3L153 4.4L152 5.2L151 6.1L150 5.1L149 5.9L148 6.4L147 5.5L146 6.4L145 6.5L144 4.8L143 6.5L142 5.2L141 5.7L140 6.1L139 5.1L138 6.2L137 6.5L136 5.7L135 5.2L134 7.3L133 5.8L132 7L131 9.8L130 10.2L129 8.9L128 7.8L127 7.3L126 6.9L125 6.6L124 6.6L123 6.8L122 6.1L121 7.1L120 7.1L119 8L118 7.4L117 7L116 8L115 6.8L114 5.9L113 8.1L112 7.5L111 6.7L110 7.7L109 8.7L108 7.5L107 7L106 8L105 7.2L104 6.1L103 6.1L102 5.8L101 7.1L100 7.6L99 8.1L98 8L97 7L96 6.2L95 6.5L94 5.7L93 6.2L92 7L91 7.9L90 7.2L89 7.9L88 6.7L87 7L86 7L85 5.9L84 6.9L83 5.3L82 6.1L81 7L80 8.3L79 8.9L78 6.6L77 7.5L76 6.6L75 6.7L74 6.8L73 7.3L72 7.8L71 8.7L70 7.9L69 6.3L68 5.9L67 6.2L66 5.2L65 10.5L64 9.2L63 7L62 5.5L61 6.3L60 6.3L59 7.4L58 6.8L57 5.2L56 6.1L55 7.1L54 7.2L53 5.8L52 5.8L51 7.4L50 5.8L49 6.1L48 7.5L47 7.1L46 7.4L45 7.4L44 7L43 6L42 6.8L41 6.4L40 6.8L39 6.2L38 5.9L37 5.9L36 11.3L35 11.4L34 8.9L33 6.9L32 7.8L31 6.1L30 6.5L29 8.2L28 7.2L27 7.6L26 7.3L25 11.3L24 10.5L23 9.4L22 6.5L21 8.1L20 6.8L19 8.1L18 7.6L17 6.8L16 6.6L15 8.3L14 8.3L13 8.1L12 7.3L11 6.4L10 6.8L9 7.9L8 8L7 9.1L6 10.5L5 8.2L4 8.3L3 6.4L2 7.4L1 7.6L0 7.4Z" fill="#3a90ea"/><path d="M0 -6.9L1 -6.3L2 -7.8L3 -7.6L4 -8.1L5 -9.4L6 -10.8L7 -9L8 -6.1L9 -6.2L10 -6.5L11 -7.9L12 -6.4L13 -7.8L14 -7.7L15 -7.2L16 -6.3L17 -7.3L18 -7.8L19 -7.3L20 -7.4L21 -6.9L22 -8.2L23 -9.1L24 -9.6L25 -9.1L26 -7.9L27 -7.1L28 -6.1L29 -6.9L30 -8.1L31 -7L32 -6.8L33 -7.9L34 -9L35 -9.6L36 -10.2L37 -7.1L38 -7.4L39 -6.8L40 -6L41 -6.6L42 -6.5L43 -5.8L44 -6.9L45 -6.7L46 -6.8L47 -5.9L48 -7.3L49 -6.1L50 -7.5L51 -7.6L52 -5.5L53 -6.9L54 -5.4L55 -6.2L56 -5.5L57 -6.8L58 -5.6L59 -7.3L60 -5.4L61 -6.9L62 -6.7L63 -6.6L64 -9L65 -9L66 -5.3L67 -7.4L68 -6.9L69 -6.2L70 -7.2L71 -10L72 -8L73 -5.2L74 -7.1L75 -7.2L76 -6.1L77 -6.4L78 -8L79 -8.5L80 -8.7L81 -6.2L82 -5.5L83 -6.4L84 -6.2L85 -6.9L86 -7.6L87 -6.2L88 -6.8L89 -6.4L90 -7L91 -7.3L92 -5.6L93 -7.3L94 -6.5L95 -6.1L96 -5.9L97 -7.8L98 -6.9L99 -7L100 -7.2L101 -5.9L102 -7.5L103 -8L104 -6.9L105 -6.9L106 -5.9L107 -6.8L108 -7.9L109 -9.7L110 -7.1L111 -7.6L112 -7.9L113 -5.9L114 -8L115 -7.9L116 -6.9L117 -6.3L118 -7.9L119 -6.8L120 -7.6L121 -5.9L122 -6.7L123 -5.7L124 -5.8L125 -7.1L126 -6.1L127 -6.4L128 -6.7L129 -9.5L130 -10.7L131 -8.8L132 -6.7L133 -5.6L134 -7.5L135 -7.2L136 -5.2L137 -6L138 -5.2L139 -5L140 -6.4L141 -6.3L142 -5.9L143 -5.5L144 -6.6L145 -4.9L146 -6L147 -5L148 -5L149 -5.2L150 -6.7L151 -5.6L152 -6.4L153 -5.1L154 -6.2L155 -4.3L156 -5.2L157 -4.7L158 -4.1L159 -7.9L160 -8.9L161 -7.7L162 -5.2L163 -6L164 -4.8L165 -4.5L166 -4.7L167 -5.8L168 -4.5L169 -4.5L170 -4.6L171 -5L172 -4.9L173 -5L174 -5.4L175 -4.3L176 -6.5L177 -7.3L178 -7.4L179 -5.8L180 -5.1L181 -5.4L182 -4.2L183 -5.5L184 -5.5L185 -4.5L186 -5.3L187 -5L188 -5.4L189 -4.8L190 -5.4L191 -5.8L192 -6L193 -5.4L194 -5.6L195 -4.9L196 -6.8L197 -8.7L198 -8.9L199 -5.6L200 -4.5L201 -5.2L202 -6.3L203 -6.1L204 -9L205 -7.6L206 -5.6L207 -5.4L208 -6.4L209 -5.1L210 -6.6L211 -4.9L212 -6.7L213 -5.3L214 -5.7L215 -6.8L216 -5L217 -5.6L218 -6.4L219 -5.9L220 -4.9L221 -5.1L222 -5.7L223 -6.9L224 -5.8L225 -6.4L226 -6.5L227 -6.5L228 -5.1L229 -5.3L230 -7.4L231 -6.4L232 -5L233 -5.7L234 -6.4L235 -5.2L236 -5.1L237 -6.1L238 -6L239 -5.3L240 -6.6L241 -5.9L242 -5.2L243 -4.8L244 -7.5L245 -8.6L246 -9L247 -5.7L248 -4.6L249 -4.9L250 -5.4L251 -4.8L252 -4.2L253 -4.2L254 -5.7L255 -4.9L256 -5.3L257 -4.4L258 -4.2L259 -4L260 -4.9L261 -5.4L262 -5.8L263 -4.6L264 -3.8L265 -5.4L266 -5.7L267 -5.2L268 -4.5L269 -5.3L270 -4.7L271 -5.6L272 -5.2L273 -5.6L274 -6.8L275 -9.1L276 -9L277 -4.3L278 -4.4L279 -5.5L280 -6.1L281 -5L282 -6.2L283 -6.1L284 -5.3L285 -4.6L286 -6.4L287 -5.5L288 -6.1L289 -6.3L290 -5.6L291 -4.7L292 -4.5L293 -4.7L294 -6.6L295 -5.1L296 -6.2L297 -5.9L298 -5.1L299 -7L300 -6.7L301 -4.8L302 -5.1L303 -6.3L304 -5.9L305 -6.6L306 -6.8L307 -7.4L308 -7.1L309 -6.2L310 -7.3L311 -6.5L312 -7.4L313 -5.4L314 -7.5L315 -6.8L316 -6.2L317 -5.7L318 -6.6L319 -6.5L320 -7.3L321 -6.2L322 -6.6L323 -5.9L324 -9.4L325 -9.5L326 -9.1L327 -7.1L328 -5.8L329 -6.6L330 -6L331 -8.6L332 -7.5L333 -6.8L334 -10.9L335 -11.8L336 -11.2L337 -7.6L338 -7.1L339 -9.1L340 -8.2L341 -8.8L342 -6.9L343 -7.4L344 -8.7L345 -7L346 -8.9L347 -6.8L348 -7.3L349 -8.4L350 -12.9L351 -10.9L352 -8.1L353 -8L354 -8.8L355 -7.7L356 -6.5L357 -7.1L358 -8.3L359 -7L360 -6.9L361 -7.6L362 -8.4L363 -6.3L364 -8L365 -8.4L366 -6.6L367 -7.7L368 -7.7L369 -7.3L370 -8.1L371 -7.3L372 -6.4L373 -6.4L374 -6.5L375 -9.3L376 -9.2L377 -7.5L378 -8L379 -6.3L380 -7.1L381 -7L382 -7.8L383 -8.1L384 -7.2L385 -6.5L386 -6.7L387 -6.7L388 -7.2L389 -7.3L390 -7.9L391 -6.6L392 -7.6L393 -7.9L394 -7L395 -6.5L396 -6.1L397 -7.9L398 -6.4L399 -7.9L400 -6.7L401 -6.5L402 -6.9L403 -8.4L404 -12L405 -10.8L406 -7.1L407 -7.8L408 -7.3L409 -6.5L410 -8.1L411 -7.8L412 -7.6L413 -8.5L414 -8.4L415 -7.4L416 -7.9L417 -7.1L418 -7.7L419 -7.7L420 -8.3L421 -7.1L422 -8.4L423 -10L424 -11.1L425 -7.1L426 -7.6L427 -8.5L428 -6.8L429 -7.7L430 -8.9L431 -8.6L432 -6.9L433 -7.3L434 -7.1L435 -9L436 -10.9L437 -11.2L438 -8.4L439 -7.6L440 -7.2L441 -7.4L442 -6.7L443 -8.1L444 -8.5L445 -7.2L446 -8.7L447 -8.1L448 -8.7L449 -6.9L450 -6.5L451 -7.2L452 -8.1L453 -8.6L454 -8.9L455 -7.1L456 -7.5L457 -7.3L458 -6L459 -6.8L460 -8.3L461 -10.3L462 -10.2L463 -7.3L464 -6.8L465 -7.9L466 -6.9L467 -7.3L468 -6.9L469 -6.4L470 -7.3L471 -6.2L472 -6.5L473 -7.6L474 -7L475 -6.4L476 -5.6L477 -6.6L478 -6.5L479 -6.9L480 -5.7L481 -7L482 -6.5L483 -6.4L484 -6.7L485 -6.2L486 -6.1L487 -5.4L488 -6L489 -5.2L490 -5.1L491 -4.9L492 -6.4L493 -8.3L494 -8.5L495 -5.8L496 -5.5L497 -5.2L498 -5.4L499 -6.4L500 -6.6L501 -5.6L502 -6.1L503 -6.5L504 -5.5L505 -5.2L506 -4.7L507 -6.9L508 -5L509 -5.7L510 -5.7L511 -7.1L512 -6.5L513 -4.9L514 -6.6L515 -5.1L516 -4.9L517 -6L518 -5.6L519 -6.9L520 -5.9L521 -8.7L522 -9.9L523 -9L524 -5.3L525 -5.1L526 -5.4L527 -5.8L528 -6.3L529 -5.8L530 -7.4L531 -10.3L532 -10.1L533 -6.2L534 -6.6L535 -6.8L536 -7.5L537 -7.7L538 -7.3L539 -5.7L540 -5.7L541 -5.5L542 -7.1L543 -6.5L544 -5.8L545 -5.3L546 -7.2L547 -7.1L548 -7.2L549 -7.1L550 -5.5L551 -6.2L552 -5.8L553 -5.3L554 -5.7L555 -6.1L556 -7.1L557 -6.7L558 -7.2L559 -9.2L560 -9.1L561 -5.4L562 -6L563 -6.2L564 -5.7L565 -7.2L566 -7L567 -6.7L568 -7.2L569 -7.1L570 -5.8L571 -5.2L572 -6.3L573 -5.5L574 -5.5L575 -5L576 -5.5L577 -5.1L578 -6.7L579 -6L580 -5.9L581 -6.5L582 -5.6L583 -6.1L584 -7.1L585 -6.5L586 -4.8L587 -6.8L588 -5.1L589 -6.8L590 -9.2L591 -9L592 -9.1L593 -4.5L594 -6.1L595 -6.3L596 -5.7L597 -4.9L598 -7.6L599 -10.6L600 -8.8L601 -4.1L602 -4L603 -4.6L604 -5.8L605 -4.2L606 -5.9L607 -6L608 -6.3L609 -5.4L610 -5.7L611 -5.6L612 -4.1L613 -4.8L614 -4.8L615 -5.8L616 -4.5L617 -5.4L618 -4.6L619 -5.8L620 -4.9L621 -6.1L622 -7.7L623 -9.9L624 -9.4L625 -6.4L626 -6.1L627 -6.9L628 -6.9L629 -6L630 -5.9L631 -6.4L632 -5.2L633 -5.8L634 -7.4L635 -6.8L636 -5.8L637 -5.6L638 -5.9L639 -6.2L640 -7.4L641 -6.7L642 -7.6L643 -6.4L644 -7.3L645 -6.4L646 -7.9L647 -7.1L648 -6.5L649 -6.4L650 -8.1L651 -8.8L652 -10L653 -7.3L654 -8.1L655 -6.6L656 -6.7L657 -5.9L658 -7.3L659 -7.5L660 -7.7L661 -7.6L662 -6.8L663 -7.8L664 -7.9L665 -6.5L666 -7L667 -7.6L668 -6.9L669 -7L670 -5.8L671 -6.3L672 -6.2L673 -5.7L674 -6.6L675 -6.6L676 -5.7L677 -5.8L678 -6.7L679 -7.9L680 -7L681 -8.2L682 -5.6L683 -7.6L684 -7.3L685 -6.3L686 -5.9L687 -7.4L688 -6.4L689 -7.3L690 -6.5L691 -8.4L692 -7.8L693 -7.9L694 -7.1L695 -6.4L696 -6.1L697 -5.3L698 -5.8L699 -5.6L700 -6.2L701 -6L702 -5.1L703 -7.4L704 -6.5L705 -5.8L706 -6.5L707 -6.3L708 -6.9L709 -5.3L710 -5.8L711 -6.2L712 -6.1L713 -6.8L714 -8.6L715 -10.3L716 -10.2L717 -7.5L718 -5.3L719 -7.1L720 -5.4L721 -6.4L722 -7.8L723 -5.6L724 -6.5L725 -6.4L726 -6.6L727 -6.3L728 -5.8L729 -7.6L730 -7L731 -6L732 -8L733 -8L734 -6.8L735 -7.8L736 -7.9L737 -5.9L738 -6.8L739 -8.1L740 -7.6L741 -7.8L742 -7.8L743 -10.1L744 -11.1L745 -10L746 -7.2L747 -6.8L748 -6.6L749 -7.8L750 -6.7L751 -8.1L752 -7.8L753 -7.6L754 -8.4L755 -7.2L756 -6.6L757 -6.3L758 -8.1L759 -7.7L760 -7.3L761 -6.4L762 -7.8L763 -6.2L764 -6.5L765 -7.2L766 -6.2L767 -7.2L768 -8L769 -6.6L770 -7.5L771 -7.8L772 -6.3L773 -6.6L774 -8.8L775 -8.3L776 -5.9L777 -7.5L778 -6.7L779 -6.6L780 -9.1L781 -10.3L782 -8.6L782 8.5L781 8.5L780 8.6L779 6.9L778 7.1L777 6.9L776 7.5L775 8.5L774 8.3L773 7.8L772 6.3L771 7.4L770 6.4L769 8.1L768 7.5L767 8L766 7.7L765 7.4L764 6.4L763 7.8L762 7.9L761 8.3L760 6.8L759 7.4L758 6.1L757 6.8L756 7.9L755 7.2L754 8.3L753 7.4L752 7.1L751 7L750 6.2L749 7.5L748 6.7L747 7.7L746 8.4L745 10.8L744 11.5L743 9L742 6.4L741 6.2L740 6.9L739 7.1L738 7.5L737 6.9L736 7L735 6.1L734 7.1L733 6.2L732 7.1L731 6.4L730 5.9L729 7.2L728 5.9L727 7.3L726 5.8L725 6.6L724 7.3L723 7.3L722 7.6L721 7L720 7.1L719 6.7L718 7.5L717 6.8L716 8.4L715 9.7L714 8.2L713 5.4L712 5.8L711 7.2L710 7L709 5.7L708 5.2L707 6.3L706 5.8L705 6.5L704 6L703 5.9L702 6.5L701 7.4L700 5.1L699 6.9L698 6.2L697 6L696 5.6L695 6.4L694 5.3L693 7.8L692 8.1L691 7.3L690 6.4L689 7.5L688 6.8L687 6L686 5.5L685 5.5L684 5.4L683 6.9L682 6.1L681 6.7L680 7.3L679 8.3L678 6.4L677 7.8L676 7.5L675 7.5L674 6.9L673 6.1L672 6.6L671 7.5L670 6.8L669 5.9L668 5.9L667 6.4L666 5.9L665 7L664 5.8L663 8L662 5.8L661 6L660 7.5L659 6.3L658 7.2L657 6.1L656 7.5L655 6.1L654 6.2L653 6.2L652 7.7L651 9.8L650 8.9L649 7.3L648 6.7L647 6.7L646 5.6L645 7.7L644 7.1L643 6.4L642 5.7L641 5.7L640 6.8L639 7.3L638 6.3L637 7.4L636 6.2L635 6.8L634 5.8L633 6.1L632 6L631 6.1L630 6.7L629 7.1L628 6.5L627 5.5L626 5.4L625 5.2L624 8.9L623 9L622 7.4L621 6.2L620 6.8L619 5.2L618 6.6L617 4.6L616 5.9L615 4.6L614 5.6L613 5.6L612 4.9L611 5L610 4.4L609 6L608 4.4L607 4L606 5.3L605 4.7L604 4L603 5.8L602 3.8L601 4.6L600 8.2L599 10L598 6.3L597 5.1L596 6.5L595 5.5L594 5L593 6.5L592 9.4L591 10.8L590 7L589 5.4L588 6.2L587 6.2L586 5.5L585 7L584 7.2L583 6.1L582 6.1L581 6.1L580 4.8L579 5.7L578 6.6L577 6.1L576 6.2L575 6.2L574 7L573 5.1L572 7L571 5.4L570 6.5L569 5.3L568 5.9L567 5.1L566 5.7L565 5.4L564 6.2L563 5.9L562 5L561 5.9L560 9.3L559 10.8L558 8.6L557 6L556 6L555 6.8L554 6.1L553 6.6L552 7.4L551 6.9L550 7.5L549 7.6L548 7.3L547 6.2L546 7.2L545 6.6L544 7.6L543 5.3L542 6.1L541 6.2L540 5.6L539 5.4L538 7L537 6.3L536 7.3L535 5.9L534 6.8L533 5.4L532 9.5L531 10L530 9.2L529 5.3L528 6L527 5.7L526 6.6L525 6.4L524 5.8L523 11.3L522 10.6L521 9.4L520 6.4L519 5.6L518 6.8L517 5.8L516 6.2L515 5.6L514 7.2L513 5.5L512 5L511 4.9L510 7L509 6.2L508 6.3L507 7L506 6L505 5.1L504 6.2L503 4.9L502 6.6L501 6.3L500 5.9L499 6.6L498 5.4L497 6.3L496 6.3L495 6.5L494 8.6L493 8.8L492 6.2L491 4.8L490 5.9L489 5.4L488 5.2L487 6.5L486 5.6L485 5.9L484 5.2L483 7.1L482 6.5L481 5.6L480 5.7L479 7.3L478 6.3L477 6.3L476 6.2L475 6.1L474 8L473 9.1L472 6.7L471 7.5L470 7.5L469 6.1L468 6.4L467 7L466 7.8L465 6.5L464 7.1L463 6.1L462 11.2L461 9.7L460 7.5L459 6.1L458 6.9L457 7.7L456 7.7L455 6.5L454 8L453 9L452 7.9L451 6.4L450 7.4L449 7.9L448 8.5L447 8L446 7L445 8.1L444 8.9L443 7.9L442 6.7L441 7.1L440 7.3L439 8.7L438 7.7L437 10L436 12.9L435 9.7L434 8.2L433 6.8L432 7.7L431 8L430 7.5L429 6.9L428 7.5L427 8.9L426 8.6L425 9L424 10.7L423 10.5L422 9.9L421 7.6L420 8.7L419 9L418 7.3L417 7.1L416 6.9L415 7L414 7L413 7.4L412 7.4L411 8.5L410 8.5L409 7.2L408 7.9L407 6.4L406 8.6L405 10.7L404 11.2L403 8.1L402 7.2L401 7.1L400 8.3L399 6.2L398 7.2L397 8.4L396 7.2L395 8.3L394 6.9L393 6.1L392 8L391 6.3L390 6.3L389 6.1L388 6.6L387 7.4L386 6L385 6.3L384 7.8L383 7.3L382 6.1L381 6.5L380 7L379 6L378 6.4L377 8.8L376 8.5L375 9.1L374 7L373 7.5L372 7.9L371 8.3L370 7.7L369 7.3L368 8L367 7L366 7.5L365 7.4L364 7.1L363 7.3L362 8.6L361 6.7L360 7L359 8.1L358 6.6L357 7L356 7.8L355 7.7L354 7.5L353 6.7L352 7.2L351 10.7L350 12.2L349 8.6L348 8.3L347 7.1L346 7.7L345 8.3L344 8.4L343 8.8L342 8.4L341 6.8L340 7.2L339 7.2L338 8.8L337 7.8L336 11.7L335 10.6L334 9.7L333 6.8L332 8.1L331 7.6L330 8L329 6.6L328 6.4L327 8.1L326 6.9L325 8L324 8.5L323 7.9L322 6.2L321 6.4L320 6.9L319 5.7L318 6.7L317 5.8L316 6.9L315 7.2L314 7.1L313 7.1L312 6L311 6.3L310 6.4L309 6.5L308 6.1L307 7L306 6.1L305 6.7L304 6.4L303 5.9L302 7.1L301 6.3L300 7.6L299 7.7L298 5.5L297 6.4L296 5.4L295 6L294 5.9L293 6.7L292 4.3L291 5.5L290 6.2L289 4.7L288 4.8L287 4.4L286 6L285 6.2L284 5.3L283 5.2L282 4.2L281 4.2L280 4.7L279 4.6L278 5.2L277 4L276 7.2L275 10L274 6.2L273 5.9L272 4.1L271 5.7L270 5L269 4L268 4.6L267 3.8L266 5.3L265 6.1L264 4.7L263 4.8L262 4.7L261 5.7L260 5.1L259 6.1L258 4.9L257 4.3L256 4.1L255 5.9L254 4.4L253 5.6L252 4.3L251 6L250 5.8L249 6.4L248 5.9L247 4.8L246 8.5L245 9.7L244 6.3L243 5.6L242 6L241 4.3L240 6.3L239 5.4L238 4.6L237 5.2L236 5.5L235 4.6L234 5.2L233 4.8L232 5.8L231 7.8L230 8.3L229 6.3L228 6.2L227 4.7L226 6.5L225 4.5L224 4.9L223 5.1L222 6L221 6.6L220 5.3L219 4.9L218 6.2L217 5.4L216 4.5L215 6L214 5.1L213 5.7L212 6.3L211 4.5L210 5.5L209 5.6L208 6.5L207 4.9L206 6.2L205 7L204 8.7L203 6.3L202 4.2L201 5.5L200 4.2L199 5.9L198 6.5L197 8.6L196 7.8L195 4.9L194 5.8L193 5.1L192 6.1L191 5.8L190 5.8L189 5.8L188 5.9L187 5.5L186 4.9L185 6L184 4.6L183 4.9L182 4.2L181 5.2L180 4L179 3.8L178 6.2L177 8.1L176 6.8L175 3.7L174 5.7L173 4L172 5.6L171 5.5L170 4.1L169 4.6L168 4.6L167 4.3L166 6L165 4.5L164 5.7L163 6L162 6L161 7.3L160 8.1L159 6.9L158 4.5L157 5.9L156 5.7L155 5.4L154 4.3L153 4.4L152 5.2L151 6.1L150 5.1L149 5.9L148 6.4L147 5.5L146 6.4L145 6.5L144 4.8L143 6.5L142 5.2L141 5.7L140 6.1L139 5.1L138 6.2L137 6.5L136 5.7L135 5.2L134 7.3L133 5.8L132 7L131 9.8L130 10.2L129 8.9L128 7.8L127 7.3L126 6.9L125 6.6L124 6.6L123 6.8L122 6.1L121 7.1L120 7.1L119 8L118 7.4L117 7L116 8L115 6.8L114 5.9L113 8.1L112 7.5L111 6.7L110 7.7L109 8.7L108 7.5L107 7L106 8L105 7.2L104 6.1L103 6.1L102 5.8L101 7.1L100 7.6L99 8.1L98 8L97 7L96 6.2L95 6.5L94 5.7L93 6.2L92 7L91 7.9L90 7.2L89 7.9L88 6.7L87 7L86 7L85 5.9L84 6.9L83 5.3L82 6.1L81 7L80 8.3L79 8.9L78 6.6L77 7.5L76 6.6L75 6.7L74 6.8L73 7.3L72 7.8L71 8.7L70 7.9L69 6.3L68 5.9L67 6.2L66 5.2L65 10.5L64 9.2L63 7L62 5.5L61 6.3L60 6.3L59 7.4L58 6.8L57 5.2L56 6.1L55 7.1L54 7.2L53 5.8L52 5.8L51 7.4L50 5.8L49 6.1L48 7.5L47 7.1L46 7.4L45 7.4L44 7L43 6L42 6.8L41 6.4L40 6.8L39 6.2L38 5.9L37 5.9L36 11.3L35 11.4L34 8.9L33 6.9L32 7.8L31 6.1L30 6.5L29 8.2L28 7.2L27 7.6L26 7.3L25 11.3L24 10.5L23 9.4L22 6.5L21 8.1L20 6.8L19 8.1L18 7.6L17 6.8L16 6.6L15 8.3L14 8.3L13 8.1L12 7.3L11 6.4L10 6.8L9 7.9L8 8L7 9.1L6 10.5L5 8.2L4 8.3L3 6.4L2 7.4L1 7.6L0 7.4Z" fill="#1f7fdc" clip-path="url(#wsel)"/></svg><i id="selL"></i><i id="ph"></i><svg style="left:364px;top:0" width="7" height="7"><path d="M0 0h7l-7 7z" fill="#f0a030"/></svg><svg style="left:553px;top:0" width="7" height="7"><path d="M0 0h7v7z" fill="#f0a030"/></svg><svg style="left:553px;top:9.5px" width="12" height="15" viewBox="0 0 13 17" preserveAspectRatio="none"><path d="M1.5 1h10a.8.8 0 0 1 .8.8v8L6.5 16 .7 9.8v-8a.8.8 0 0 1 .8-.8z" fill="#3b8fe8" stroke="#1f5fae" stroke-width="1"/><path d="M6.5 9v5" stroke="#1f4f8e" stroke-width="1"/></svg></div><div id="scroll"><i id="sthumb"></i><svg style="left:5px;top:3px" width="7" height="9" viewBox="0 0 7 9"><path d="M5.5 1L1.5 4.5l4 3.5" fill="none" stroke="#333" stroke-width="1.8"/></svg><svg style="left:769px;top:3px" width="7" height="9" viewBox="0 0 7 9"><path d="M1.5 1l4 3.5-4 3.5" fill="none" stroke="#333" stroke-width="1.8"/></svg></div><div id="bottom"></div><span class="t" style="left:22px;top:635.5px;font-size:12px;line-height:1;color:#2e2e2e;transform:scaleX(0.925);">Total duration: 00:17.73</span><div id="pill"></div><span class="t" style="left:302.6px;top:633.8px;font-size:15.5px;line-height:1;color:#555;font-family:'Liberation Serif',serif;transform:scaleX(0.931);">00:07.64</span><div id="play"></div><svg style="left:390.3px;top:630.4px" width="19" height="21" viewBox="0 0 19 21"><path d="M1 1l17 9.5L1 20z" fill="#444" stroke="#444" stroke-width="1" stroke-linejoin="round"/></svg><div id="stop"></div><i style="position:absolute;left:439.3px;top:635.7px;width:11.5px;height:11.3px;background:#4a4a4a"></i><div class="zc" style="left:644px;top:630.5px"></div><i style="position:absolute;left:648px;top:639px;width:10px;height:1.6px;background:#777"></i><i style="position:absolute;left:665px;top:639.3px;width:86px;height:1.6px;background:#8c8c8c"></i><div class="zc" style="left:754px;top:630.5px"></div><i style="position:absolute;left:758.5px;top:639px;width:10px;height:1.6px;background:#666"></i><i style="position:absolute;left:762.7px;top:634.8px;width:1.6px;height:10px;background:#666"></i><svg style="left:708px;top:631px" width="10" height="18" viewBox="0 0 10 18"><path d="M1.5.8h7a.8.8 0 0 1 .8.8v11L5 16.8.7 12.6v-11a.8.8 0 0 1 .8-.8z" fill="#f2f2f2" stroke="#8e8e8e" stroke-width="1"/></svg>
</div>
</body></html>
